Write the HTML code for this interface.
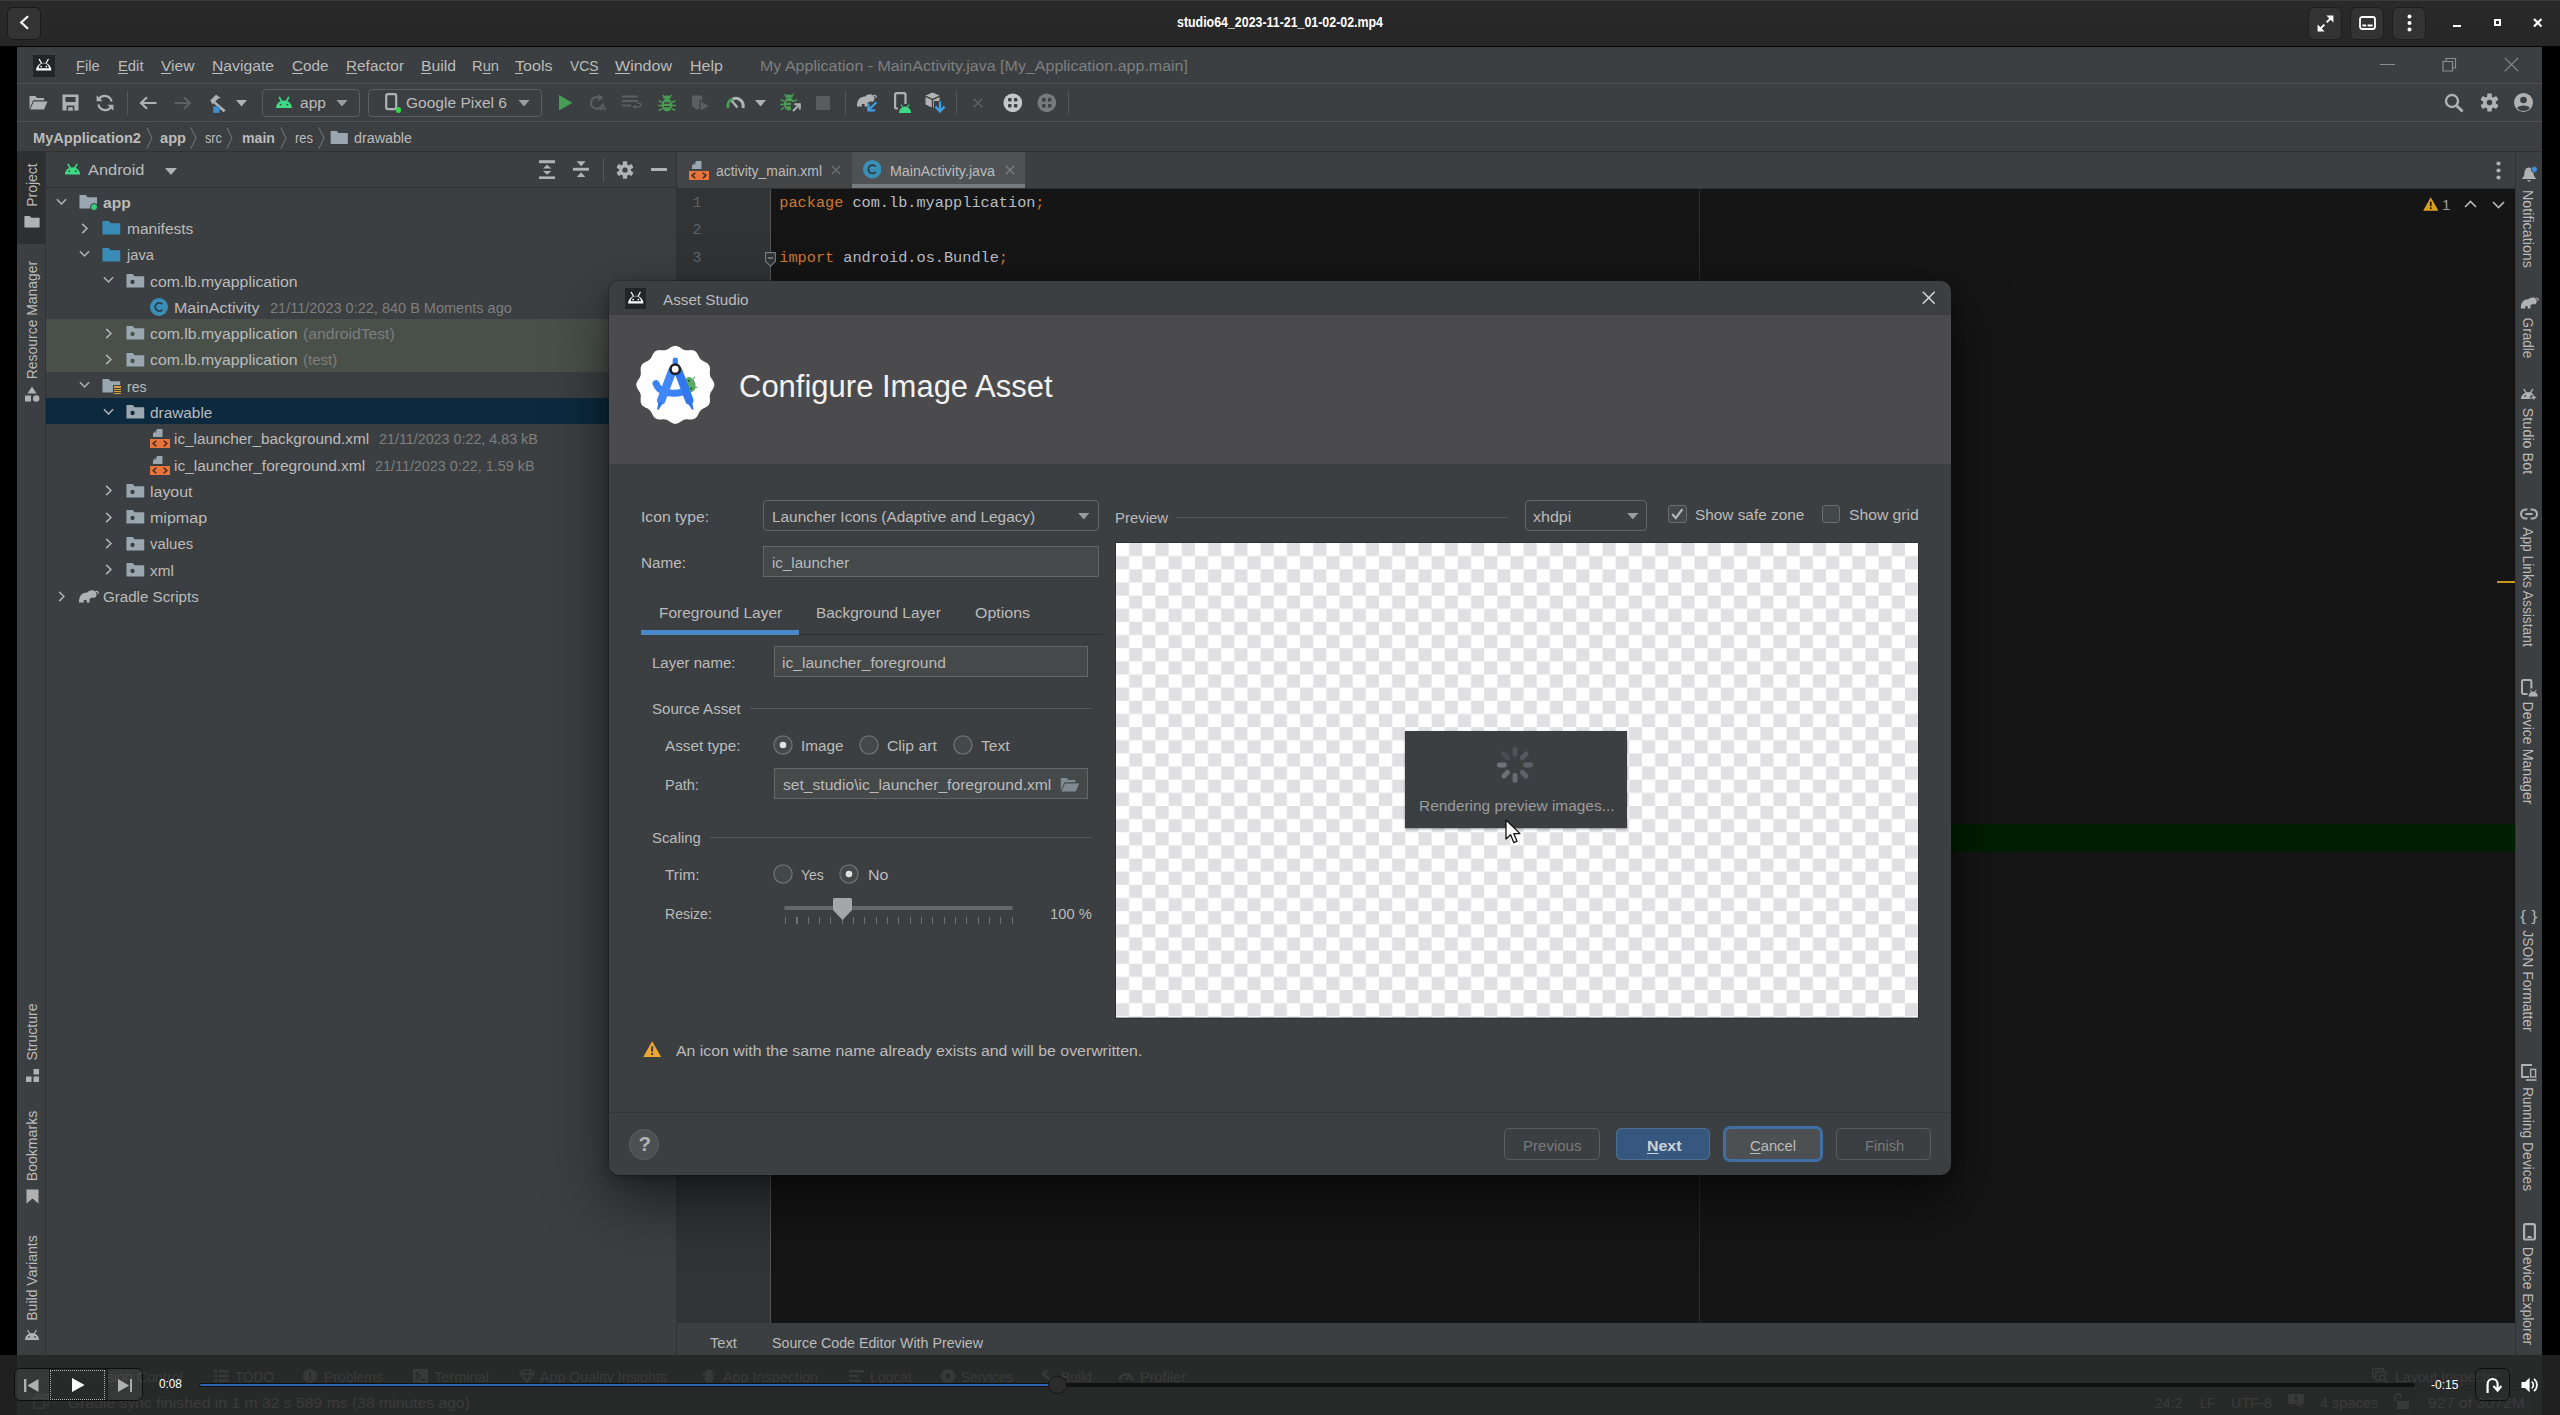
<!DOCTYPE html><html><head><meta charset="utf-8"><title>studio64</title><style>html,body{margin:0;padding:0;background:#000;}
body{width:2560px;height:1415px;position:relative;overflow:hidden;font-family:"Liberation Sans",sans-serif;}
div,span,svg{position:absolute;box-sizing:border-box;}
.t{white-space:pre;transform-origin:0 0;line-height:1;font-family:"Liberation Sans",sans-serif;}
.m{font-family:"Liberation Mono",monospace;}
u{text-decoration:underline;text-underline-offset:2px;text-decoration-thickness:1px;}
</style></head><body><div style="left:17.00px;top:47.00px;width:2525.00px;height:1368.00px;background:#3c3f41;"></div><div style="left:17.00px;top:83.00px;width:2525.00px;height:1.00px;background:#515151;"></div><div style="left:17.00px;top:121.00px;width:2525.00px;height:1.00px;background:#515151;"></div><div style="left:17.00px;top:151.00px;width:2525.00px;height:1.00px;background:#323232;"></div><div style="left:33.00px;top:55.00px;width:21.50px;height:21.50px;background:#222528;"></div><svg style="left:34.00px;top:55.30px;" width="19.50" height="19.50" viewBox="0 0 20 20"><path d="M2.2 16 A7.8 8 0 0 1 17.8 16 Z" fill="#ffffff"/><path d="M4.7 13.5 A5.3 5 0 0 1 15.3 13.5 Z" fill="#222528"/><path d="M5.4 4.4 L7.4 8 M14.6 4.4 L12.6 8" stroke="#ffffff" stroke-width="1.3" stroke-linecap="round"/><circle cx="7.3" cy="12" r="0.85" fill="#ffffff"/><circle cx="12.7" cy="12" r="0.85" fill="#ffffff"/></svg><span class="t" style="left:76.40px;top:57.86px;font-size:15.4px;font-weight:400;color:#bbbbbb;transform:scaleX(0.9511);"><u>F</u>ile</span><span class="t" style="left:117.50px;top:57.86px;font-size:15.4px;font-weight:400;color:#bbbbbb;transform:scaleX(0.9611);"><u>E</u>dit</span><span class="t" style="left:160.50px;top:57.86px;font-size:15.4px;font-weight:400;color:#bbbbbb;transform:scaleX(1.0123);"><u>V</u>iew</span><span class="t" style="left:212.00px;top:57.86px;font-size:15.4px;font-weight:400;color:#bbbbbb;transform:scaleX(1.0203);"><u>N</u>avigate</span><span class="t" style="left:292.00px;top:57.86px;font-size:15.4px;font-weight:400;color:#bbbbbb;transform:scaleX(0.9915);"><u>C</u>ode</span><span class="t" style="left:346.00px;top:57.86px;font-size:15.4px;font-weight:400;color:#bbbbbb;transform:scaleX(0.9968);"><u>R</u>efactor</span><span class="t" style="left:421.00px;top:57.86px;font-size:15.4px;font-weight:400;color:#bbbbbb;transform:scaleX(1.0224);"><u>B</u>uild</span><span class="t" style="left:472.00px;top:57.86px;font-size:15.4px;font-weight:400;color:#bbbbbb;transform:scaleX(0.9558);">R<u>u</u>n</span><span class="t" style="left:515.00px;top:57.86px;font-size:15.4px;font-weight:400;color:#bbbbbb;transform:scaleX(1.0435);"><u>T</u>ools</span><span class="t" style="left:569.50px;top:57.86px;font-size:15.4px;font-weight:400;color:#bbbbbb;transform:scaleX(0.9003);">VC<u>S</u></span><span class="t" style="left:615.00px;top:57.86px;font-size:15.4px;font-weight:400;color:#bbbbbb;transform:scaleX(1.0411);"><u>W</u>indow</span><span class="t" style="left:690.00px;top:57.86px;font-size:15.4px;font-weight:400;color:#bbbbbb;transform:scaleX(1.0419);"><u>H</u>elp</span><span class="t" style="left:760.00px;top:57.86px;font-size:15.4px;font-weight:400;color:#7d7f80;transform:scaleX(1.0409);">My Application - MainActivity.java [My_Application.app.main]</span><div style="left:2380.00px;top:64.00px;width:15.00px;height:1.30px;background:#8a8c8d;"></div><svg style="left:2442.00px;top:57.00px;" width="15.00" height="15.00" viewBox="0 0 15 15"><path d="M1 4.5 H10.5 V14 H1 Z M4 4.5 V1.5 H13.5 V11 H10.5" fill="none" stroke="#8a8c8d" stroke-width="1.2"/></svg><svg style="left:2504.00px;top:57.00px;" width="15.00" height="15.00" viewBox="0 0 15 15"><path d="M0.8 0.8 L14.2 14.2 M14.2 0.8 L0.8 14.2" stroke="#8a8c8d" stroke-width="1.2"/></svg><svg style="left:28.50px;top:95.00px;" width="19.00" height="15.00" viewBox="0 0 19.5 15.5"><path d="M0.5 14.5 V1 H6.5 L8.3 3.2 H15.5 V5.5 H4.2 L0.5 14.5 Z" fill="#afb1b3"/><path d="M1.2 15 L4.8 6.6 H19 L15.4 15 Z" fill="#afb1b3"/></svg><svg style="left:62.20px;top:94.00px;" width="17.00" height="17.00" viewBox="0 0 17 17"><path d="M0.5 0.5 H16.5 V16.5 H0.5 Z" fill="#afb1b3"/><rect x="3.4" y="3" width="10.2" height="5" fill="#3c3f41"/><rect x="4.6" y="11.6" width="7.8" height="5" fill="#3c3f41"/><rect x="6.2" y="13.2" width="4.6" height="3.4" fill="#afb1b3"/></svg><svg style="left:96.00px;top:93.50px;" width="18.00" height="18.00" viewBox="0 0 18 18"><path d="M15.6 7.4 A7 7 0 0 0 3.2 4.6 M2.4 10.6 A7 7 0 0 0 14.8 13.4" fill="none" stroke="#afb1b3" stroke-width="2.3"/><path d="M0.6 1.2 V7.2 H6.6 Z M17.4 16.8 V10.8 H11.4 Z" fill="#afb1b3"/></svg><div style="left:126.50px;top:91.00px;width:1.00px;height:24.00px;background:#555759;"></div><svg style="left:139.00px;top:95.50px;" width="18.00" height="14.00" viewBox="0 0 18 14"><path d="M17.5 7 H2.5 M8 1.2 L2 7 L8 12.8" fill="none" stroke="#afb1b3" stroke-width="2.2"/></svg><svg style="left:174.00px;top:95.50px;" width="18.00" height="14.00" viewBox="0 0 18 14"><path d="M0.5 7 H15.5 M10 1.2 L16 7 L10 12.8" fill="none" stroke="#5e6163" stroke-width="2.2"/></svg><svg style="left:206.50px;top:92.50px;" width="20.00" height="20.00" viewBox="0 0 20 20"><path d="M3.2 7.6 L9 1.8 L13.8 5 L11.2 5.6 L8.4 8.4 L18.6 17.2 L16.6 19.2 L6.6 10.2 L5.4 11.2 Z" fill="#afb1b3"/><rect x="6.2" y="13.4" width="6.4" height="6.4" fill="#3f8fd0"/></svg><svg style="left:236.00px;top:100.25px;" width="11.00" height="6.50" viewBox="0 0 12 7"><path d="M0 0 H12 L6 7 Z" fill="#afb1b3"/></svg><div style="left:262.00px;top:88.50px;width:98.00px;height:28.50px;background:transparent;border:1px solid #5a5d5f;border-radius:4px;"></div><svg style="left:274.50px;top:96.00px;" width="18.00" height="13.00" viewBox="1.5 4 17 12"><path d="M2.5 15.2 A7.5 7.2 0 0 1 17.5 15.2 Z" fill="#3ddc84"/><path d="M5.6 5.2 L7.6 8.6 M14.4 5.2 L12.4 8.6" stroke="#3ddc84" stroke-width="1.6" stroke-linecap="round"/><circle cx="6.8" cy="12" r="0.9" fill="#3c3f41"/><circle cx="13.2" cy="12" r="0.9" fill="#3c3f41"/></svg><span class="t" style="left:300.00px;top:95.26px;font-size:15.4px;font-weight:400;color:#bbbbbb;transform:scaleX(1.0122);">app</span><svg style="left:336.00px;top:99.95px;" width="12.00" height="6.50" viewBox="0 0 12 7"><path d="M0 0 H12 L6 7 Z" fill="#9a9da0"/></svg><div style="left:368.00px;top:88.50px;width:174.00px;height:28.50px;background:transparent;border:1px solid #5a5d5f;border-radius:4px;"></div><svg style="left:384.50px;top:92.50px;" width="13.00" height="18.00" viewBox="0 0 13 18"><rect x="1.2" y="1.2" width="10" height="15" rx="1.6" fill="none" stroke="#afb1b3" stroke-width="2.2"/></svg><div style="left:395.50px;top:107.00px;width:5.50px;height:5.50px;background:#31d64a;border-radius:50%;"></div><span class="t" style="left:406.00px;top:95.26px;font-size:15.4px;font-weight:400;color:#bbbbbb;transform:scaleX(1.0089);">Google Pixel 6</span><svg style="left:518.00px;top:99.95px;" width="12.00" height="6.50" viewBox="0 0 12 7"><path d="M0 0 H12 L6 7 Z" fill="#9a9da0"/></svg><svg style="left:558.55px;top:94.75px;" width="13.50" height="15.50" viewBox="0 0 13.5 15.5"><path d="M0 0 L13.5 7.75 L0 15.5 Z" fill="#499c54"/></svg><svg style="left:588.50px;top:94.00px;" width="18.00" height="17.00" viewBox="0 0 18 17"><path d="M10.6 3.8 A5.8 5.8 0 1 0 13 11.4" fill="none" stroke="#5c5f61" stroke-width="2.2"/><path d="M8.8 0.2 L14.6 3.6 L9.6 7.6 Z" fill="#5c5f61"/><path d="M11.4 16.6 L14 10 L16.6 16.6 M12.3 14.6 H15.7" fill="none" stroke="#5c5f61" stroke-width="1.3"/></svg><svg style="left:622.00px;top:95.00px;" width="20.00" height="15.00" viewBox="0 0 20 15"><path d="M0 1.5 H16 M0 6 H16 M0 10.5 H9" stroke="#5c5f61" stroke-width="2"/><path d="M11 11.8 H17.2 A1.8 1.8 0 0 0 17.2 8.2 H15" fill="none" stroke="#5c5f61" stroke-width="1.4"/><path d="M13.4 9.4 L10.6 11.8 L13.4 14.2 Z" fill="#5c5f61"/></svg><svg style="left:657.70px;top:93.50px;" width="18.00" height="18.00" viewBox="0 0 18 18"><ellipse cx="9" cy="11" rx="5.2" ry="6.4" fill="#499c54"/><path d="M5.4 4.8 A3.6 3.2 0 0 1 12.6 4.8 Z" fill="#499c54"/><path d="M4.6 1 L6.6 3.4 M13.4 1 L11.4 3.4 M0.6 6.6 L4 8.2 M17.4 6.6 L14 8.2 M0.2 11.4 H4 M17.8 11.4 H14 M0.8 16.6 L4.2 14.6 M17.2 16.6 L13.8 14.6" stroke="#499c54" stroke-width="1.5" fill="none"/><path d="M6 9 H12 M6 12.6 H12" stroke="#3c3f41" stroke-width="1.3"/></svg><svg style="left:691.00px;top:93.50px;" width="20.00" height="18.00" viewBox="0 0 20 18"><path d="M1 1.5 H11 V12 L6 16 L1 12 Z" fill="#5c5f61"/><path d="M9 6.5 L19 12 L9 17.5 Z" fill="#5c5f61" stroke="#3c3f41" stroke-width="1.2"/></svg><svg style="left:725.50px;top:96.00px;" width="19.00" height="13.00" viewBox="0 0 19 13"><path d="M2.2 12 A7.4 7.4 0 0 1 6.2 3.2" fill="none" stroke="#499c54" stroke-width="3"/><path d="M6.6 3 A7.4 7.4 0 0 1 16.8 12" fill="none" stroke="#afb1b3" stroke-width="3"/><path d="M5.6 4.6 L11.4 11.6" stroke="#afb1b3" stroke-width="2.4"/></svg><svg style="left:754.50px;top:100.25px;" width="11.00" height="6.50" viewBox="0 0 12 7"><path d="M0 0 H12 L6 7 Z" fill="#afb1b3"/></svg><svg style="left:780.00px;top:92.60px;" width="18.00" height="18.00" viewBox="0 0 18 18"><ellipse cx="9" cy="11" rx="5.2" ry="6.4" fill="#499c54"/><path d="M5.4 4.8 A3.6 3.2 0 0 1 12.6 4.8 Z" fill="#499c54"/><path d="M4.6 1 L6.6 3.4 M13.4 1 L11.4 3.4 M0.6 6.6 L4 8.2 M17.4 6.6 L14 8.2 M0.2 11.4 H4 M17.8 11.4 H14 M0.8 16.6 L4.2 14.6 M17.2 16.6 L13.8 14.6" stroke="#499c54" stroke-width="1.5" fill="none"/><path d="M6 9 H12 M6 12.6 H12" stroke="#3c3f41" stroke-width="1.3"/></svg><svg style="left:790.50px;top:102.00px;" width="10.50" height="10.50" viewBox="0 0 10.5 10.5"><rect x="0" y="0" width="10.5" height="10.5" fill="#3c3f41"/><path d="M2 9 L8.2 2.8 M3.4 2.2 H8.8 V7.6" fill="none" stroke="#afb1b3" stroke-width="2"/></svg><div style="left:816.00px;top:96.00px;width:14.00px;height:14.00px;background:#595b5d;"></div><div style="left:844.50px;top:91.00px;width:1.00px;height:24.00px;background:#555759;"></div><svg style="left:855.50px;top:93.00px;" width="21.00" height="15.00" viewBox="0 0 21 15"><path d="M1 13.6 C0.6 7 4 3.2 9.4 3.4 C11 1.2 15.6 0.4 17.6 3 C19.4 5.2 18.4 8.6 15.8 9 C15.2 9 14.8 8.4 15 7.8 C14 9.2 12.6 9.6 11.6 9.4 V13.6 H8.6 V11 H5.8 V13.6 Z" fill="#afb1b3"/><path d="M17.4 2.6 C19.6 1.6 20.8 3.4 19.6 5" fill="none" stroke="#afb1b3" stroke-width="1.2"/></svg><svg style="left:866.00px;top:101.00px;" width="12.00" height="11.00" viewBox="0 0 12 11"><path d="M10.4 1.2 L3.4 8.2 M2.4 2.6 V9.4 H9.2" fill="none" stroke="#3d9fe0" stroke-width="2.3"/></svg><svg style="left:893.50px;top:91.50px;" width="13.00" height="18.00" viewBox="0 0 13 18"><rect x="1.1" y="1.1" width="10.4" height="15.4" rx="1.6" fill="none" stroke="#afb1b3" stroke-width="2.2"/></svg><svg style="left:897.50px;top:103.50px;" width="14.00" height="9.00" viewBox="0 0 14 9"><rect x="0" y="0" width="14" height="9" fill="#3c3f41"/><path d="M1 9 A6 6.4 0 0 1 13 9 Z" fill="#3ddc84"/><path d="M3 0.6 L4.6 3 M11 0.6 L9.4 3" stroke="#3ddc84" stroke-width="1.1"/></svg><svg style="left:924.50px;top:92.00px;" width="15.00" height="16.00" viewBox="0 0 15 16"><path d="M7.5 0.5 L14.5 3.6 L7.5 6.8 L0.5 3.6 Z" fill="#afb1b3"/><path d="M0.5 5 L6.8 8 V15.4 L0.5 12.4 Z" fill="#afb1b3"/><path d="M14.5 5 L8.2 8 V15.4 L14.5 12.4 Z" fill="#afb1b3"/></svg><svg style="left:934.00px;top:101.00px;" width="12.00" height="12.00" viewBox="0 0 12 12"><rect x="0" y="0" width="12" height="12" fill="#3c3f41"/><path d="M6 0.5 V9.5 M1.4 5.6 L6 10.4 L10.6 5.6" fill="none" stroke="#3d9fe0" stroke-width="2.3"/></svg><div style="left:956.00px;top:91.00px;width:1.00px;height:24.00px;background:#555759;"></div><svg style="left:973.00px;top:97.50px;" width="10.00" height="10.00" viewBox="0 0 10 10"><path d="M0.8 0.8 L9.2 9.2 M9.2 0.8 L0.8 9.2" stroke="#606365" stroke-width="1.4" fill="none"/></svg><svg style="left:1002.75px;top:92.75px;" width="19.50" height="19.50" viewBox="0 0 20 20"><circle cx="10" cy="10" r="9.6" fill="#c4c6c8"/><rect x="5.2" y="5.2" width="3.6" height="3.6" rx="1" fill="#3c3f41"/><rect x="5.2" y="11.2" width="3.6" height="3.6" rx="1" fill="#3c3f41"/><rect x="11.2" y="5.2" width="3.6" height="3.6" rx="1" fill="#3c3f41"/><rect x="11.2" y="11.2" width="3.6" height="3.6" rx="1" fill="#3c3f41"/></svg><svg style="left:1036.95px;top:92.75px;" width="19.50" height="19.50" viewBox="0 0 20 20"><circle cx="10" cy="10" r="9.6" fill="#77797b"/><rect x="5.2" y="5.2" width="3.6" height="3.6" rx="1" fill="#3c3f41"/><rect x="5.2" y="11.2" width="3.6" height="3.6" rx="1" fill="#3c3f41"/><rect x="11.2" y="5.2" width="3.6" height="3.6" rx="1" fill="#3c3f41"/><rect x="11.2" y="11.2" width="3.6" height="3.6" rx="1" fill="#3c3f41"/></svg><div style="left:1068.00px;top:91.00px;width:1.00px;height:24.00px;background:#555759;"></div><svg style="left:2443.50px;top:93.00px;" width="20.00" height="20.00" viewBox="0 0 20 20"><circle cx="8" cy="8" r="6" fill="none" stroke="#afb1b3" stroke-width="2.4"/><path d="M12.4 12.4 L18.6 18.6" stroke="#afb1b3" stroke-width="2.8"/></svg><svg style="left:2479.50px;top:93.00px;" width="19.00" height="19.00" viewBox="0 0 20 20"><rect x="7.6" y="0.4" width="4.8" height="6" rx="0.8" fill="#afb1b3" transform="rotate(0 10 10)"/><rect x="7.6" y="0.4" width="4.8" height="6" rx="0.8" fill="#afb1b3" transform="rotate(60 10 10)"/><rect x="7.6" y="0.4" width="4.8" height="6" rx="0.8" fill="#afb1b3" transform="rotate(120 10 10)"/><rect x="7.6" y="0.4" width="4.8" height="6" rx="0.8" fill="#afb1b3" transform="rotate(180 10 10)"/><rect x="7.6" y="0.4" width="4.8" height="6" rx="0.8" fill="#afb1b3" transform="rotate(240 10 10)"/><rect x="7.6" y="0.4" width="4.8" height="6" rx="0.8" fill="#afb1b3" transform="rotate(300 10 10)"/><circle cx="10" cy="10" r="6.7" fill="#afb1b3"/><circle cx="10" cy="10" r="2.9" fill="#3c3f41"/></svg><svg style="left:2514.00px;top:93.00px;" width="19.00" height="19.00" viewBox="0 0 19 19"><circle cx="9.5" cy="9.5" r="9.5" fill="#afb1b3"/><circle cx="9.5" cy="7" r="3.3" fill="#3c3f41"/><path d="M3.2 15.4 C4 11.6 15 11.6 15.8 15.4 A9 9 0 0 1 3.2 15.4 Z" fill="#3c3f41"/></svg><span class="t" style="left:33.00px;top:129.76px;font-size:15.4px;font-weight:700;color:#bbbbbb;transform:scaleX(0.9496);">MyApplication2</span><span class="t" style="left:160.00px;top:129.76px;font-size:15.4px;font-weight:700;color:#bbbbbb;transform:scaleX(0.9498);">app</span><span class="t" style="left:205.00px;top:129.76px;font-size:15.4px;font-weight:400;color:#bbbbbb;transform:scaleX(0.8280);">src</span><span class="t" style="left:242.00px;top:129.76px;font-size:15.4px;font-weight:700;color:#bbbbbb;transform:scaleX(0.9187);">main</span><span class="t" style="left:295.00px;top:129.76px;font-size:15.4px;font-weight:400;color:#bbbbbb;transform:scaleX(0.8415);">res</span><svg style="left:145.50px;top:127.00px;" width="7.00" height="22.00" viewBox="0 0 7 22"><path d="M0.8 0.5 L6 11 L0.8 21.5" fill="none" stroke="#6d7072" stroke-width="1.1"/></svg><svg style="left:190.00px;top:127.00px;" width="7.00" height="22.00" viewBox="0 0 7 22"><path d="M0.8 0.5 L6 11 L0.8 21.5" fill="none" stroke="#6d7072" stroke-width="1.1"/></svg><svg style="left:226.00px;top:127.00px;" width="7.00" height="22.00" viewBox="0 0 7 22"><path d="M0.8 0.5 L6 11 L0.8 21.5" fill="none" stroke="#6d7072" stroke-width="1.1"/></svg><svg style="left:280.00px;top:127.00px;" width="7.00" height="22.00" viewBox="0 0 7 22"><path d="M0.8 0.5 L6 11 L0.8 21.5" fill="none" stroke="#6d7072" stroke-width="1.1"/></svg><svg style="left:317.50px;top:127.00px;" width="7.00" height="22.00" viewBox="0 0 7 22"><path d="M0.8 0.5 L6 11 L0.8 21.5" fill="none" stroke="#6d7072" stroke-width="1.1"/></svg><svg style="left:329.50px;top:129.50px;" width="18.50" height="14.50" viewBox="0 0 20 16"><path d="M0.5 1 H7.2 L9.2 3.4 H19.5 V15.5 H0.5 Z" fill="#9aa7b0"/></svg><span class="t" style="left:354.00px;top:129.76px;font-size:15.4px;font-weight:400;color:#bbbbbb;transform:scaleX(0.9285);">drawable</span><div style="left:17.00px;top:152.00px;width:28.50px;height:1203.00px;background:#3c3f41;"></div><div style="left:17.00px;top:152.00px;width:28.50px;height:92.00px;background:#2d2f30;"></div><div style="left:45.00px;top:152.00px;width:1.00px;height:1203.00px;background:#323232;"></div><span class="t" style="left:32.00px;top:184.75px;font-size:15.4px;font-weight:400;color:#bbbbbb;transform-origin:0 0;transform:rotate(-90deg) scaleX(0.9080) translate(-50%,-50%);">Project</span><svg style="left:23.50px;top:214.50px;" width="16.00" height="13.00" viewBox="0 0 20 16"><path d="M0.5 1 H7.2 L9.2 3.4 H19.5 V15.5 H0.5 Z" fill="#afb1b3"/></svg><span class="t" style="left:32.00px;top:319.80px;font-size:15.4px;font-weight:400;color:#bbbbbb;transform-origin:0 0;transform:rotate(-90deg) scaleX(0.9046) translate(-50%,-50%);">Resource Manager</span><svg style="left:24.00px;top:386.00px;" width="16.00" height="16.00" viewBox="0 0 16 16"><path d="M8 0.5 L12.5 7.5 H3.5 Z" fill="#afb1b3"/><rect x="1" y="9.5" width="6" height="6" fill="#afb1b3"/><circle cx="12.2" cy="12.5" r="3.2" fill="#afb1b3"/></svg><span class="t" style="left:32.00px;top:1031.90px;font-size:15.4px;font-weight:400;color:#bbbbbb;transform-origin:0 0;transform:rotate(-90deg) scaleX(0.9127) translate(-50%,-50%);">Structure</span><svg style="left:25.50px;top:1068.50px;" width="13.00" height="13.00" viewBox="0 0 13 13"><rect x="0" y="7.5" width="5.5" height="5.5" fill="#afb1b3"/><rect x="7.5" y="7.5" width="5.5" height="5.5" fill="#afb1b3"/><rect x="7.5" y="0" width="5.5" height="5.5" fill="#afb1b3"/></svg><span class="t" style="left:32.00px;top:1146.25px;font-size:15.4px;font-weight:400;color:#bbbbbb;transform-origin:0 0;transform:rotate(-90deg) scaleX(0.9158) translate(-50%,-50%);">Bookmarks</span><svg style="left:25.50px;top:1188.50px;" width="13.00" height="15.00" viewBox="0 0 13 15"><path d="M0.5 0.5 H12.5 V14.5 L6.5 9.6 L0.5 14.5 Z" fill="#afb1b3"/></svg><span class="t" style="left:32.00px;top:1278.25px;font-size:15.4px;font-weight:400;color:#bbbbbb;transform-origin:0 0;transform:rotate(-90deg) scaleX(0.9112) translate(-50%,-50%);">Build Variants</span><svg style="left:24.00px;top:1328.50px;" width="16.00" height="12.00" viewBox="1.5 4 17 12"><path d="M2.5 15.2 A7.5 7.2 0 0 1 17.5 15.2 Z" fill="#afb1b3"/><path d="M5.6 5.2 L7.6 8.6 M14.4 5.2 L12.4 8.6" stroke="#afb1b3" stroke-width="1.3" stroke-linecap="round"/><circle cx="6.8" cy="12" r="0.9" fill="#3c3f41"/><circle cx="13.2" cy="12" r="0.9" fill="#3c3f41"/></svg><div style="left:46.00px;top:152.00px;width:630.00px;height:1203.00px;background:#3c3f41;"></div><div style="left:46.00px;top:186.50px;width:630.00px;height:1.00px;background:#323232;"></div><div style="left:676.00px;top:152.00px;width:1.00px;height:1203.00px;background:#323232;"></div><svg style="left:63.50px;top:163.00px;" width="17.00" height="12.50" viewBox="1.5 4 17 12"><path d="M2.5 15.2 A7.5 7.2 0 0 1 17.5 15.2 Z" fill="#3ddc84"/><path d="M5.6 5.2 L7.6 8.6 M14.4 5.2 L12.4 8.6" stroke="#3ddc84" stroke-width="1.6" stroke-linecap="round"/><circle cx="6.8" cy="12" r="0.9" fill="#3c3f41"/><circle cx="13.2" cy="12" r="0.9" fill="#3c3f41"/></svg><span class="t" style="left:88.00px;top:162.26px;font-size:15.4px;font-weight:400;color:#bbbbbb;transform:scaleX(1.0648);">Android</span><svg style="left:165.00px;top:167.50px;" width="12.00" height="7.00" viewBox="0 0 12 7"><path d="M0 0 H12 L6 7 Z" fill="#afb1b3"/></svg><svg style="left:538.90px;top:159.60px;" width="16.20" height="19.60" viewBox="0 0 16.2 19.6"><rect x="0" y="0.2" width="16.2" height="3" fill="#afb1b3"/><rect x="0" y="16.4" width="16.2" height="3" fill="#afb1b3"/><path d="M8.1 4.8 L12.3 8.6 H3.9 Z M8.1 14.8 L12.3 11 H3.9 Z" fill="#afb1b3"/></svg><svg style="left:573.00px;top:161.00px;" width="16.20" height="16.40" viewBox="0 0 16.2 16.4"><rect x="0" y="6.8" width="16.2" height="2.9" fill="#afb1b3"/><path d="M8.1 5.2 L12.6 0.2 H3.6 Z M8.1 11.2 L12.6 16.2 H3.6 Z" fill="#afb1b3"/></svg><div style="left:603.00px;top:158.00px;width:1.00px;height:24.00px;background:#555759;"></div><svg style="left:615.50px;top:160.50px;" width="18.00" height="18.00" viewBox="0 0 20 20"><rect x="7.6" y="0.4" width="4.8" height="6" rx="0.8" fill="#afb1b3" transform="rotate(0 10 10)"/><rect x="7.6" y="0.4" width="4.8" height="6" rx="0.8" fill="#afb1b3" transform="rotate(60 10 10)"/><rect x="7.6" y="0.4" width="4.8" height="6" rx="0.8" fill="#afb1b3" transform="rotate(120 10 10)"/><rect x="7.6" y="0.4" width="4.8" height="6" rx="0.8" fill="#afb1b3" transform="rotate(180 10 10)"/><rect x="7.6" y="0.4" width="4.8" height="6" rx="0.8" fill="#afb1b3" transform="rotate(240 10 10)"/><rect x="7.6" y="0.4" width="4.8" height="6" rx="0.8" fill="#afb1b3" transform="rotate(300 10 10)"/><circle cx="10" cy="10" r="6.7" fill="#afb1b3"/><circle cx="10" cy="10" r="2.9" fill="#3c3f41"/></svg><div style="left:651.00px;top:168.30px;width:16.00px;height:2.60px;background:#afb1b3;"></div><div style="left:46.00px;top:319.40px;width:630.00px;height:52.30px;background:#49504a;"></div><div style="left:46.00px;top:398.30px;width:630.00px;height:26.20px;background:#0d293e;"></div><svg style="left:55.60px;top:197.50px;" width="11.00" height="7.50" viewBox="0 0 12 8"><path d="M1 1.2 L6 6.4 L11 1.2" fill="none" stroke="#afb1b3" stroke-width="1.7"/></svg><svg style="left:78.75px;top:194.00px;" width="18.70" height="15.00" viewBox="0 0 20 16"><path d="M0.5 1 H7.2 L9.2 3.4 H19.5 V15.5 H0.5 Z" fill="#9aa7b0"/></svg><div style="left:89.75px;top:202.50px;width:8.00px;height:8.00px;background:#33d17a;border-radius:50%;border:1px solid #3c3f41;"></div><span class="t" style="left:102.50px;top:194.86px;font-size:15.4px;font-weight:700;color:#bbbbbb;transform:scaleX(1.0155);">app</span><svg style="left:81.40px;top:222.77px;" width="7.50" height="11.00" viewBox="0 0 8 12"><path d="M1.2 1 L6.4 6 L1.2 11" fill="none" stroke="#afb1b3" stroke-width="1.7"/></svg><svg style="left:102.25px;top:220.27px;" width="18.70" height="15.00" viewBox="0 0 20 16"><path d="M0.5 1 H7.2 L9.2 3.4 H19.5 V15.5 H0.5 Z" fill="#3a8cb8"/></svg><span class="t" style="left:126.50px;top:221.13px;font-size:15.4px;font-weight:400;color:#bbbbbb;transform:scaleX(1.0065);">manifests</span><svg style="left:79.40px;top:250.04px;" width="11.00" height="7.50" viewBox="0 0 12 8"><path d="M1 1.2 L6 6.4 L11 1.2" fill="none" stroke="#afb1b3" stroke-width="1.7"/></svg><svg style="left:102.25px;top:246.54px;" width="18.70" height="15.00" viewBox="0 0 20 16"><path d="M0.5 1 H7.2 L9.2 3.4 H19.5 V15.5 H0.5 Z" fill="#3a8cb8"/></svg><span class="t" style="left:126.50px;top:247.40px;font-size:15.4px;font-weight:400;color:#bbbbbb;transform:scaleX(0.9527);">java</span><svg style="left:103.00px;top:276.31px;" width="11.00" height="7.50" viewBox="0 0 12 8"><path d="M1 1.2 L6 6.4 L11 1.2" fill="none" stroke="#afb1b3" stroke-width="1.7"/></svg><svg style="left:126.00px;top:272.81px;" width="18.70" height="15.00" viewBox="0 0 20 16"><path d="M0.5 1 H7.2 L9.2 3.4 H19.5 V15.5 H0.5 Z" fill="#9aa7b0"/><circle cx="7" cy="9.6" r="2.3" fill="#3c3f41"/></svg><span class="t" style="left:150.20px;top:273.67px;font-size:15.4px;font-weight:400;color:#bbbbbb;transform:scaleX(1.0270);">com.lb.myapplication</span><svg style="left:150.00px;top:298.08px;" width="18.00" height="18.00" viewBox="0 0 18 18"><circle cx="9" cy="9" r="9" fill="#3a8fb7"/><path d="M12.4 6.3 A4.1 4.1 0 1 0 12.4 11.7" fill="none" stroke="#2b3b45" stroke-width="1.7"/></svg><span class="t" style="left:174.20px;top:299.94px;font-size:15.4px;font-weight:400;color:#bbbbbb;transform:scaleX(1.0425);">MainActivity</span><span class="t" style="left:269.80px;top:299.94px;font-size:15.4px;font-weight:400;color:#7e7e7e;transform:scaleX(0.9430);">21/11/2023 0:22, 840 B Moments ago</span><svg style="left:105.00px;top:327.85px;" width="7.50" height="11.00" viewBox="0 0 8 12"><path d="M1.2 1 L6.4 6 L1.2 11" fill="none" stroke="#afb1b3" stroke-width="1.7"/></svg><svg style="left:126.00px;top:325.35px;" width="18.70" height="15.00" viewBox="0 0 20 16"><path d="M0.5 1 H7.2 L9.2 3.4 H19.5 V15.5 H0.5 Z" fill="#9aa7b0"/><circle cx="7" cy="9.6" r="2.3" fill="#49504a"/></svg><span class="t" style="left:150.20px;top:326.21px;font-size:15.4px;font-weight:400;color:#bbbbbb;transform:scaleX(1.0270);">com.lb.myapplication</span><span class="t" style="left:303.00px;top:326.21px;font-size:15.4px;font-weight:400;color:#7e7e7e;transform:scaleX(1.0208);">(androidTest)</span><svg style="left:105.00px;top:354.12px;" width="7.50" height="11.00" viewBox="0 0 8 12"><path d="M1.2 1 L6.4 6 L1.2 11" fill="none" stroke="#afb1b3" stroke-width="1.7"/></svg><svg style="left:126.00px;top:351.62px;" width="18.70" height="15.00" viewBox="0 0 20 16"><path d="M0.5 1 H7.2 L9.2 3.4 H19.5 V15.5 H0.5 Z" fill="#9aa7b0"/><circle cx="7" cy="9.6" r="2.3" fill="#49504a"/></svg><span class="t" style="left:150.20px;top:352.48px;font-size:15.4px;font-weight:400;color:#bbbbbb;transform:scaleX(1.0270);">com.lb.myapplication</span><span class="t" style="left:303.00px;top:352.48px;font-size:15.4px;font-weight:400;color:#7e7e7e;transform:scaleX(0.9754);">(test)</span><svg style="left:79.40px;top:381.39px;" width="11.00" height="7.50" viewBox="0 0 12 8"><path d="M1 1.2 L6 6.4 L11 1.2" fill="none" stroke="#afb1b3" stroke-width="1.7"/></svg><svg style="left:102.25px;top:377.89px;" width="18.70" height="15.00" viewBox="0 0 20 16"><path d="M0.5 1 H7.2 L9.2 3.4 H19.5 V15.5 H0.5 Z" fill="#9aa7b0"/></svg><div style="left:112.75px;top:385.39px;width:9.00px;height:9.50px;background:#3c3f41;"></div><div style="left:113.75px;top:386.39px;width:7.50px;height:1.30px;background:#d9a343;"></div><div style="left:113.75px;top:388.59px;width:7.50px;height:1.30px;background:#d9a343;"></div><div style="left:113.75px;top:390.79px;width:7.50px;height:1.30px;background:#d9a343;"></div><div style="left:113.75px;top:392.99px;width:7.50px;height:1.30px;background:#d9a343;"></div><span class="t" style="left:126.50px;top:378.75px;font-size:15.4px;font-weight:400;color:#bbbbbb;transform:scaleX(0.9210);">res</span><svg style="left:103.00px;top:407.66px;" width="11.00" height="7.50" viewBox="0 0 12 8"><path d="M1 1.2 L6 6.4 L11 1.2" fill="none" stroke="#afb1b3" stroke-width="1.7"/></svg><svg style="left:126.00px;top:404.16px;" width="18.70" height="15.00" viewBox="0 0 20 16"><path d="M0.5 1 H7.2 L9.2 3.4 H19.5 V15.5 H0.5 Z" fill="#9aa7b0"/><circle cx="7" cy="9.6" r="2.3" fill="#0d293e"/></svg><span class="t" style="left:150.20px;top:405.02px;font-size:15.4px;font-weight:400;color:#bbbbbb;transform:scaleX(0.9989);">drawable</span><svg style="left:150.00px;top:428.43px;" width="20.00" height="20.00" viewBox="0 0 20 20"><path d="M3 9 V5.2 L7.2 1 H12.5 V9 Z" fill="#9aa7b0"/><path d="M3 4.6 L6.6 1 V4.6 Z" fill="#3c3f41" opacity="0.55"/><rect x="0" y="11" width="20" height="9" fill="#e8743b"/><path d="M6.3 12.8 L3.2 15.5 L6.3 18.2 M13.7 12.8 L16.8 15.5 L13.7 18.2" fill="none" stroke="#3a2a22" stroke-width="1.5"/></svg><span class="t" style="left:174.20px;top:431.29px;font-size:15.4px;font-weight:400;color:#bbbbbb;transform:scaleX(0.9963);">ic_launcher_background.xml</span><span class="t" style="left:379.40px;top:431.29px;font-size:15.4px;font-weight:400;color:#7e7e7e;transform:scaleX(0.9293);">21/11/2023 0:22, 4.83 kB</span><svg style="left:150.00px;top:454.70px;" width="20.00" height="20.00" viewBox="0 0 20 20"><path d="M3 9 V5.2 L7.2 1 H12.5 V9 Z" fill="#9aa7b0"/><path d="M3 4.6 L6.6 1 V4.6 Z" fill="#3c3f41" opacity="0.55"/><rect x="0" y="11" width="20" height="9" fill="#e8743b"/><path d="M6.3 12.8 L3.2 15.5 L6.3 18.2 M13.7 12.8 L16.8 15.5 L13.7 18.2" fill="none" stroke="#3a2a22" stroke-width="1.5"/></svg><span class="t" style="left:174.20px;top:457.56px;font-size:15.4px;font-weight:400;color:#bbbbbb;transform:scaleX(1.0066);">ic_launcher_foreground.xml</span><span class="t" style="left:375.40px;top:457.56px;font-size:15.4px;font-weight:400;color:#7e7e7e;transform:scaleX(0.9334);">21/11/2023 0:22, 1.59 kB</span><svg style="left:105.00px;top:485.47px;" width="7.50" height="11.00" viewBox="0 0 8 12"><path d="M1.2 1 L6.4 6 L1.2 11" fill="none" stroke="#afb1b3" stroke-width="1.7"/></svg><svg style="left:126.00px;top:482.97px;" width="18.70" height="15.00" viewBox="0 0 20 16"><path d="M0.5 1 H7.2 L9.2 3.4 H19.5 V15.5 H0.5 Z" fill="#9aa7b0"/><circle cx="7" cy="9.6" r="2.3" fill="#3c3f41"/></svg><span class="t" style="left:150.20px;top:483.83px;font-size:15.4px;font-weight:400;color:#bbbbbb;transform:scaleX(1.0346);">layout</span><svg style="left:105.00px;top:511.74px;" width="7.50" height="11.00" viewBox="0 0 8 12"><path d="M1.2 1 L6.4 6 L1.2 11" fill="none" stroke="#afb1b3" stroke-width="1.7"/></svg><svg style="left:126.00px;top:509.24px;" width="18.70" height="15.00" viewBox="0 0 20 16"><path d="M0.5 1 H7.2 L9.2 3.4 H19.5 V15.5 H0.5 Z" fill="#9aa7b0"/><circle cx="7" cy="9.6" r="2.3" fill="#3c3f41"/></svg><span class="t" style="left:150.20px;top:510.10px;font-size:15.4px;font-weight:400;color:#bbbbbb;transform:scaleX(1.0429);">mipmap</span><svg style="left:105.00px;top:538.01px;" width="7.50" height="11.00" viewBox="0 0 8 12"><path d="M1.2 1 L6.4 6 L1.2 11" fill="none" stroke="#afb1b3" stroke-width="1.7"/></svg><svg style="left:126.00px;top:535.51px;" width="18.70" height="15.00" viewBox="0 0 20 16"><path d="M0.5 1 H7.2 L9.2 3.4 H19.5 V15.5 H0.5 Z" fill="#9aa7b0"/><circle cx="7" cy="9.6" r="2.3" fill="#3c3f41"/></svg><span class="t" style="left:150.20px;top:536.37px;font-size:15.4px;font-weight:400;color:#bbbbbb;transform:scaleX(0.9708);">values</span><svg style="left:105.00px;top:564.28px;" width="7.50" height="11.00" viewBox="0 0 8 12"><path d="M1.2 1 L6.4 6 L1.2 11" fill="none" stroke="#afb1b3" stroke-width="1.7"/></svg><svg style="left:126.00px;top:561.78px;" width="18.70" height="15.00" viewBox="0 0 20 16"><path d="M0.5 1 H7.2 L9.2 3.4 H19.5 V15.5 H0.5 Z" fill="#9aa7b0"/><circle cx="7" cy="9.6" r="2.3" fill="#3c3f41"/></svg><span class="t" style="left:150.20px;top:562.64px;font-size:15.4px;font-weight:400;color:#bbbbbb;transform:scaleX(0.9943);">xml</span><svg style="left:57.60px;top:590.55px;" width="7.50" height="11.00" viewBox="0 0 8 12"><path d="M1.2 1 L6.4 6 L1.2 11" fill="none" stroke="#afb1b3" stroke-width="1.7"/></svg><svg style="left:77.75px;top:588.55px;" width="21.00" height="15.00" viewBox="0 0 21 15"><path d="M1 13.6 C0.6 7 4 3.2 9.4 3.4 C11 1.2 15.6 0.4 17.6 3 C19.4 5.2 18.4 8.6 15.8 9 C15.2 9 14.8 8.4 15 7.8 C14 9.2 12.6 9.6 11.6 9.4 V13.6 H8.6 V11 H5.8 V13.6 Z" fill="#afb1b3"/><path d="M17.4 2.6 C19.6 1.6 20.8 3.4 19.6 5" fill="none" stroke="#afb1b3" stroke-width="1.2"/></svg><span class="t" style="left:102.50px;top:588.91px;font-size:15.4px;font-weight:400;color:#bbbbbb;transform:scaleX(0.9824);">Gradle Scripts</span><div style="left:677.00px;top:152.00px;width:1838.00px;height:36.00px;background:#3c3f41;"></div><div style="left:677.00px;top:187.50px;width:1838.00px;height:1.00px;background:#323232;"></div><div style="left:677.00px;top:152.00px;width:174.50px;height:35.50px;background:#434446;"></div><div style="left:851.50px;top:152.00px;width:173.50px;height:35.50px;background:#4e5254;"></div><div style="left:851.50px;top:183.50px;width:173.50px;height:4.00px;background:#747a80;"></div><svg style="left:688.80px;top:160.00px;" width="20.00" height="20.00" viewBox="0 0 20 20"><path d="M3 9 V5.2 L7.2 1 H12.5 V9 Z" fill="#9aa7b0"/><path d="M3 4.6 L6.6 1 V4.6 Z" fill="#3c3f41" opacity="0.55"/><rect x="0" y="11" width="20" height="9" fill="#e8743b"/><path d="M6.3 12.8 L3.2 15.5 L6.3 18.2 M13.7 12.8 L16.8 15.5 L13.7 18.2" fill="none" stroke="#3a2a22" stroke-width="1.5"/></svg><span class="t" style="left:715.80px;top:163.26px;font-size:15.4px;font-weight:400;color:#bbbbbb;transform:scaleX(0.9047);">activity_main.xml</span><svg style="left:831.00px;top:165.00px;" width="10.00" height="10.00" viewBox="0 0 10 10"><path d="M0.8 0.8 L9.2 9.2 M9.2 0.8 L0.8 9.2" stroke="#6e7173" stroke-width="1.3" fill="none"/></svg><svg style="left:862.50px;top:160.30px;" width="18.50" height="18.50" viewBox="0 0 18 18"><circle cx="9" cy="9" r="9" fill="#3a8fb7"/><path d="M12.4 6.3 A4.1 4.1 0 1 0 12.4 11.7" fill="none" stroke="#2b3b45" stroke-width="1.7"/></svg><span class="t" style="left:889.50px;top:163.26px;font-size:15.4px;font-weight:400;color:#bbbbbb;transform:scaleX(0.9254);">MainActivity.java</span><svg style="left:1005.00px;top:165.00px;" width="10.00" height="10.00" viewBox="0 0 10 10"><path d="M0.8 0.8 L9.2 9.2 M9.2 0.8 L0.8 9.2" stroke="#7d8082" stroke-width="1.3" fill="none"/></svg><svg style="left:2495.50px;top:160.50px;" width="5.00" height="19.00" viewBox="0 0 5 19"><circle cx="2.5" cy="2.5" r="2.1" fill="#afb1b3"/><circle cx="2.5" cy="9.5" r="2.1" fill="#afb1b3"/><circle cx="2.5" cy="16.5" r="2.1" fill="#afb1b3"/></svg><div style="left:677.00px;top:188.50px;width:1838.00px;height:1134.50px;background:#151516;"></div><div style="left:677.00px;top:188.50px;width:93.50px;height:1134.50px;background:#313335;"></div><div style="left:770.00px;top:188.50px;width:1.00px;height:1134.50px;background:#555657;"></div><div style="left:1699.00px;top:188.50px;width:1.00px;height:1134.50px;background:#2c2c2e;"></div><span class="t m" style="left:692.50px;top:195.70px;font-size:15px;font-weight:400;color:#606366;transform:scaleX(1.0000);">1</span><span class="t m" style="left:692.50px;top:223.20px;font-size:15px;font-weight:400;color:#606366;transform:scaleX(1.0000);">2</span><span class="t m" style="left:692.50px;top:250.70px;font-size:15px;font-weight:400;color:#606366;transform:scaleX(1.0000);">3</span><span class="t m" style="left:779.30px;top:195.81px;font-size:15.25px;font-weight:400;color:#cc7832;transform:scaleX(1.0000);">package </span><span class="t m" style="left:852.42px;top:195.81px;font-size:15.25px;font-weight:400;color:#b9bdc4;transform:scaleX(1.0000);">com.lb.myapplication</span><span class="t m" style="left:1035.22px;top:195.81px;font-size:15.25px;font-weight:400;color:#cc7832;transform:scaleX(1.0000);">;</span><span class="t m" style="left:779.30px;top:250.81px;font-size:15.25px;font-weight:400;color:#cc7832;transform:scaleX(1.0000);">import </span><span class="t m" style="left:843.28px;top:250.81px;font-size:15.25px;font-weight:400;color:#b9bdc4;transform:scaleX(1.0000);">android.os.Bundle</span><span class="t m" style="left:998.66px;top:250.81px;font-size:15.25px;font-weight:400;color:#cc7832;transform:scaleX(1.0000);">;</span><svg style="left:765.00px;top:251.50px;" width="11.00" height="15.00" viewBox="0 0 11 15"><path d="M0.6 0.6 H10.4 V9.4 L5.5 14.2 L0.6 9.4 Z" fill="#313335" stroke="#7a7d80" stroke-width="1.1"/><path d="M2.8 6 H8.2" stroke="#9a9da0" stroke-width="1.2"/></svg><svg style="left:2422.50px;top:196.50px;" width="15.50" height="14.00" viewBox="0 0 18 16"><path d="M9 0.3 L17.8 15.7 H0.2 Z" fill="#d9a020"/><rect x="8" y="5.2" width="2" height="5.4" fill="#1a1a1a"/><rect x="8" y="11.8" width="2" height="2.1" fill="#1a1a1a"/></svg><span class="t" style="left:2442.00px;top:197.30px;font-size:15px;font-weight:400;color:#9a9da0;transform:scaleX(1.0000);">1</span><svg style="left:2464.00px;top:200.00px;" width="13.00" height="8.00" viewBox="0 0 13 8"><path d="M1 7 L6.5 1.4 L12 7" fill="none" stroke="#b4b6b8" stroke-width="1.7"/></svg><svg style="left:2492.00px;top:200.50px;" width="13.00" height="8.00" viewBox="0 0 13 8"><path d="M1 1 L6.5 6.6 L12 1" fill="none" stroke="#b4b6b8" stroke-width="1.7"/></svg><div style="left:2497.00px;top:580.50px;width:18.00px;height:2.00px;background:#c9971c;"></div><div style="left:677.00px;top:824.00px;width:1838.00px;height:27.50px;background:#001e02;"></div><div style="left:677.00px;top:1323.00px;width:1838.00px;height:33.00px;background:#3c3f41;"></div><span class="t" style="left:710.40px;top:1334.96px;font-size:15.4px;font-weight:400;color:#bbbbbb;transform:scaleX(0.9492);">Text</span><span class="t" style="left:772.00px;top:1334.96px;font-size:15.4px;font-weight:400;color:#bbbbbb;transform:scaleX(0.9239);">Source Code Editor With Preview</span><div style="left:690.00px;top:1355.50px;width:66.00px;height:3.50px;background:#747a80;"></div><div style="left:2515.00px;top:152.00px;width:27.00px;height:1203.00px;background:#3c3f41;"></div><div style="left:2515.00px;top:152.00px;width:1.00px;height:1203.00px;background:#323232;"></div><svg style="left:2520.50px;top:166.00px;" width="17.00" height="18.00" viewBox="0 0 17 18"><path d="M8 1.5 C3.8 1.5 3.4 6 3.2 9.6 L0.8 13 H15.2 L12.8 9.6 C12.6 6 12.2 1.5 8 1.5 Z" fill="#afb1b3"/><path d="M6 14.2 A2.1 2.1 0 0 0 10 14.2 Z" fill="#afb1b3"/><circle cx="13.3" cy="3.4" r="3.1" fill="#3d8fe0" stroke="#3c3f41" stroke-width="0.8"/></svg><span class="t" style="left:2527.50px;top:229.00px;font-size:15.4px;font-weight:400;color:#bbbbbb;transform-origin:0 0;transform:rotate(90deg) scaleX(0.9303) translate(-50%,-50%);">Notifications</span><svg style="left:2519.50px;top:296.00px;" width="19.00" height="14.00" viewBox="0 0 21 15"><path d="M1 13.6 C0.6 7 4 3.2 9.4 3.4 C11 1.2 15.6 0.4 17.6 3 C19.4 5.2 18.4 8.6 15.8 9 C15.2 9 14.8 8.4 15 7.8 C14 9.2 12.6 9.6 11.6 9.4 V13.6 H8.6 V11 H5.8 V13.6 Z" fill="#afb1b3"/><path d="M17.4 2.6 C19.6 1.6 20.8 3.4 19.6 5" fill="none" stroke="#afb1b3" stroke-width="1.2"/></svg><span class="t" style="left:2527.50px;top:338.20px;font-size:15.4px;font-weight:400;color:#bbbbbb;transform-origin:0 0;transform:rotate(90deg) scaleX(0.8831) translate(-50%,-50%);">Gradle</span><svg style="left:2520.00px;top:387.00px;" width="18.00" height="16.00" viewBox="1.5 4 18.5 14"><path d="M2.5 15.2 A7.5 7.2 0 0 1 17.5 15.2 Z" fill="#afb1b3"/><path d="M5.6 5.2 L7.6 8.6 M14.4 5.2 L12.4 8.6" stroke="#afb1b3" stroke-width="1.3" stroke-linecap="round"/><circle cx="6.8" cy="12" r="0.9" fill="#3c3f41"/><circle cx="13.2" cy="12" r="0.9" fill="#3c3f41"/><path d="M15.5 9.5 L16.6 12.4 L19.5 13.5 L16.6 14.6 L15.5 17.5 L14.4 14.6 L11.5 13.5 L14.4 12.4 Z" fill="#afb1b3" stroke="#3c3f41" stroke-width="0.8"/></svg><span class="t" style="left:2527.50px;top:440.75px;font-size:15.4px;font-weight:400;color:#bbbbbb;transform-origin:0 0;transform:rotate(90deg) scaleX(0.9362) translate(-50%,-50%);">Studio Bot</span><svg style="left:2520.00px;top:507.50px;" width="18.00" height="12.00" viewBox="0 0 18 12"><path d="M7.4 1.4 H5.6 A4.6 4.6 0 0 0 5.6 10.6 H7.4 M10.6 1.4 H12.4 A4.6 4.6 0 0 1 12.4 10.6 H10.6 M5.4 6 H12.6" fill="none" stroke="#afb1b3" stroke-width="2"/></svg><span class="t" style="left:2527.50px;top:586.75px;font-size:15.4px;font-weight:400;color:#bbbbbb;transform-origin:0 0;transform:rotate(90deg) scaleX(0.8953) translate(-50%,-50%);">App Links Assistant</span><svg style="left:2520.50px;top:678.50px;" width="17.00" height="18.00" viewBox="0 0 17 18"><rect x="1" y="1" width="9.4" height="14" rx="1.4" fill="none" stroke="#afb1b3" stroke-width="2"/><rect x="6.5" y="9.5" width="10.5" height="8.5" fill="#3c3f41"/><path d="M7.6 17.6 A4.6 5 0 0 1 16.8 17.6 Z" fill="#afb1b3"/><path d="M9 10.8 L10.4 12.8 M15.4 10.8 L14 12.8" stroke="#afb1b3" stroke-width="1"/></svg><span class="t" style="left:2527.50px;top:752.50px;font-size:15.4px;font-weight:400;color:#bbbbbb;transform-origin:0 0;transform:rotate(90deg) scaleX(0.9190) translate(-50%,-50%);">Device Manager</span><span class="t" style="left:2520.20px;top:907.88px;font-size:15.5px;font-weight:400;color:#afb1b3;transform:scaleX(1.1791);">{ }</span><span class="t" style="left:2527.50px;top:981.25px;font-size:15.4px;font-weight:400;color:#bbbbbb;transform-origin:0 0;transform:rotate(90deg) scaleX(0.9060) translate(-50%,-50%);">JSON Formatter</span><svg style="left:2521.00px;top:1063.50px;" width="16.00" height="17.00" viewBox="0 0 16 17"><path d="M11 1 H1 V13 H8" fill="none" stroke="#afb1b3" stroke-width="1.8"/><rect x="9.6" y="5.4" width="5" height="7.6" fill="none" stroke="#afb1b3" stroke-width="1.4"/><path d="M5 16 H15.5" stroke="#afb1b3" stroke-width="1.6"/></svg><span class="t" style="left:2527.50px;top:1138.60px;font-size:15.4px;font-weight:400;color:#bbbbbb;transform-origin:0 0;transform:rotate(90deg) scaleX(0.8955) translate(-50%,-50%);">Running Devices</span><svg style="left:2522.50px;top:1223.00px;" width="13.00" height="18.00" viewBox="0 0 13 18"><rect x="1.1" y="1.1" width="10.8" height="15.4" rx="1.6" fill="none" stroke="#afb1b3" stroke-width="2.2"/><rect x="4.5" y="13" width="4" height="2" fill="#afb1b3"/></svg><span class="t" style="left:2527.50px;top:1295.55px;font-size:15.4px;font-weight:400;color:#bbbbbb;transform-origin:0 0;transform:rotate(90deg) scaleX(0.9048) translate(-50%,-50%);">Device Explorer</span><div style="left:17.00px;top:1355.00px;width:2525.00px;height:60.00px;background:#3c3f41;"></div><div style="left:17.00px;top:1362.00px;width:2525.00px;height:1.00px;background:#323232;"></div><div style="left:17.00px;top:1390.00px;width:2525.00px;height:1.00px;background:#323232;"></div><span class="t" style="left:85.00px;top:1368.96px;font-size:15.4px;font-weight:400;color:#bbbbbb;transform:scaleX(0.9313);">Version Control</span><span class="t" style="left:235.00px;top:1368.96px;font-size:15.4px;font-weight:400;color:#bbbbbb;transform:scaleX(0.8826);">TODO</span><span class="t" style="left:324.00px;top:1368.96px;font-size:15.4px;font-weight:400;color:#bbbbbb;transform:scaleX(0.9075);">Problems</span><span class="t" style="left:434.00px;top:1368.96px;font-size:15.4px;font-weight:400;color:#bbbbbb;transform:scaleX(0.9455);">Terminal</span><span class="t" style="left:540.00px;top:1368.96px;font-size:15.4px;font-weight:400;color:#bbbbbb;transform:scaleX(0.9277);">App Quality Insights</span><span class="t" style="left:723.00px;top:1368.96px;font-size:15.4px;font-weight:400;color:#bbbbbb;transform:scaleX(0.9329);">App Inspection</span><span class="t" style="left:870.00px;top:1368.96px;font-size:15.4px;font-weight:400;color:#bbbbbb;transform:scaleX(0.9087);">Logcat</span><span class="t" style="left:961.00px;top:1368.96px;font-size:15.4px;font-weight:400;color:#bbbbbb;transform:scaleX(0.8811);">Services</span><span class="t" style="left:1061.00px;top:1368.96px;font-size:15.4px;font-weight:400;color:#bbbbbb;transform:scaleX(0.9055);">Build</span><span class="t" style="left:1140.00px;top:1368.96px;font-size:15.4px;font-weight:400;color:#bbbbbb;transform:scaleX(0.9436);">Profiler</span><svg style="left:66.00px;top:1369.00px;" width="15.00" height="14.00" viewBox="0 0 15 14"><circle cx="3" cy="2.6" r="2" fill="#afb1b3"/><circle cx="3" cy="11.4" r="2" fill="#afb1b3"/><circle cx="11" cy="4" r="2" fill="#afb1b3"/><path d="M3 3 V11 M11 5 C11 9 3 7 3 10" fill="none" stroke="#afb1b3" stroke-width="1.4"/></svg><svg style="left:214.00px;top:1369.00px;" width="15.00" height="14.00" viewBox="0 0 15 14"><rect x="0" y="1" width="3" height="2.6" fill="#afb1b3"/><rect x="4.6" y="1" width="10" height="2.6" fill="#afb1b3"/><rect x="0" y="5.7" width="3" height="2.6" fill="#afb1b3"/><rect x="4.6" y="5.7" width="10" height="2.6" fill="#afb1b3"/><rect x="0" y="10.4" width="3" height="2.6" fill="#afb1b3"/><rect x="4.6" y="10.4" width="10" height="2.6" fill="#afb1b3"/></svg><svg style="left:303.00px;top:1369.00px;" width="15.00" height="14.00" viewBox="0 0 15 14"><circle cx="7" cy="7" r="7" fill="#afb1b3"/><rect x="6" y="3" width="2" height="5" fill="#3c3f41"/><rect x="6" y="9.4" width="2" height="2" fill="#3c3f41"/></svg><svg style="left:413.00px;top:1369.00px;" width="15.00" height="14.00" viewBox="0 0 15 14"><rect x="0" y="0" width="15" height="14" fill="#afb1b3"/><path d="M2.6 3.4 L6.4 6.8 L2.6 10.2 M7.6 10.6 H12" fill="none" stroke="#3c3f41" stroke-width="1.6"/></svg><svg style="left:519.00px;top:1369.00px;" width="16.00" height="14.00" viewBox="0 0 16 14"><path d="M3.6 0.8 H12.4 L15.4 5 L8 13.4 L0.6 5 Z M0.8 5 H15.2 M5.6 1 L4.6 5 L8 13 L11.4 5 L10.4 1" fill="none" stroke="#afb1b3" stroke-width="1.3"/></svg><svg style="left:702.00px;top:1369.00px;" width="15.00" height="14.00" viewBox="0 0 15 14"><path d="M3.4 4.6 V1.6 Q7 -0.4 10.6 1.6 V4.6 H13.6 V6.2 H0.4 V4.6 Z" fill="#afb1b3"/><ellipse cx="7" cy="9.6" rx="4.4" ry="4" fill="#afb1b3"/></svg><svg style="left:849.00px;top:1369.00px;" width="15.00" height="14.00" viewBox="0 0 15 14"><rect x="0" y="1" width="15" height="2.4" fill="#afb1b3"/><rect x="0" y="5.8" width="9" height="2.4" fill="#afb1b3"/><rect x="0" y="10.6" width="12" height="2.4" fill="#afb1b3"/></svg><svg style="left:940.00px;top:1369.00px;" width="16.00" height="14.00" viewBox="0 0 16 14"><path d="M4 0.4 H12 L16 7 L12 13.6 H4 L0 7 Z" fill="#afb1b3"/><path d="M6 3.6 L11.4 7 L6 10.4 Z" fill="#3c3f41"/></svg><svg style="left:1040.00px;top:1369.00px;" width="15.00" height="14.00" viewBox="0 0 15 14"><path d="M1.4 4.6 L5.6 0.6 L9.2 3 L7.2 3.6 L5.4 5.4 L13.6 12.4 L12 14 L4 7 L3 7.8 Z" fill="#afb1b3"/></svg><svg style="left:1118.00px;top:1369.00px;" width="16.00" height="14.00" viewBox="0 0 16 14"><path d="M1.6 11.6 A6.4 6.4 0 1 1 14.4 11.6" fill="none" stroke="#afb1b3" stroke-width="2.6"/><path d="M8 11 L12 5" stroke="#afb1b3" stroke-width="2"/></svg><span class="t" style="left:2395.00px;top:1368.96px;font-size:15.4px;font-weight:400;color:#bbbbbb;transform:scaleX(0.9139);">Layout Inspector</span><svg style="left:2372.00px;top:1368.00px;" width="17.00" height="16.00" viewBox="0 0 17 16"><path d="M3 9 H0.8 V0.8 H11.2 V3" fill="none" stroke="#afb1b3" stroke-width="1.4"/><path d="M8 12 H3.8 V3.8 H14.2 V7" fill="none" stroke="#afb1b3" stroke-width="1.4"/><circle cx="10.6" cy="9.8" r="2.8" fill="none" stroke="#afb1b3" stroke-width="1.5"/><path d="M12.6 11.8 L16 15.2" stroke="#afb1b3" stroke-width="1.8"/></svg><svg style="left:33.00px;top:1394.00px;" width="16.00" height="15.00" viewBox="0 0 16 15"><rect x="0.8" y="3.8" width="10.4" height="10.4" fill="none" stroke="#afb1b3" stroke-width="1.4"/><path d="M4 3.8 V0.8 H15.2 V11 H11.4" fill="none" stroke="#afb1b3" stroke-width="1.4"/></svg><span class="t" style="left:68.00px;top:1394.96px;font-size:15.4px;font-weight:400;color:#bbbbbb;transform:scaleX(1.0216);">Gradle sync finished in 1 m 32 s 589 ms (38 minutes ago)</span><span class="t" style="left:2155.00px;top:1394.96px;font-size:15.4px;font-weight:400;color:#bbbbbb;transform:scaleX(0.9176);">24:2</span><span class="t" style="left:2199.50px;top:1394.96px;font-size:15.4px;font-weight:400;color:#bbbbbb;transform:scaleX(0.8070);">LF</span><span class="t" style="left:2231.00px;top:1394.96px;font-size:15.4px;font-weight:400;color:#bbbbbb;transform:scaleX(0.9402);">UTF-8</span><svg style="left:2288.00px;top:1394.00px;" width="16.00" height="14.00" viewBox="0 0 16 14"><path d="M0 0 H16 V10 H12 L14 14 L8 10 H0 Z" fill="#afb1b3"/><rect x="7" y="1.6" width="2" height="4.4" fill="#3c3f41"/><rect x="7" y="7" width="2" height="1.8" fill="#3c3f41"/></svg><span class="t" style="left:2320.00px;top:1394.96px;font-size:15.4px;font-weight:400;color:#bbbbbb;transform:scaleX(0.9414);">4 spaces</span><svg style="left:2393.50px;top:1392.50px;" width="15.00" height="16.00" viewBox="0 0 15 16"><rect x="3" y="8" width="12" height="8" fill="#afb1b3"/><path d="M1 8 V4 A3 3 0 0 1 7 4 V5" fill="none" stroke="#afb1b3" stroke-width="1.8"/></svg><div style="left:2418.50px;top:1391.00px;width:112.00px;height:24.00px;background:#45494a;"></div><span class="t" style="left:2427.80px;top:1394.96px;font-size:15.4px;font-weight:400;color:#bbbbbb;transform:scaleX(1.0305);">927 of 3072M</span><div style="left:609.00px;top:280.50px;width:1341.50px;height:894.00px;background:#3c3f41;border-radius:10px;box-shadow:0 26px 58px 2px rgba(0,0,0,0.5),0 4px 14px rgba(0,0,0,0.25),0 0 0 1px rgba(30,30,30,0.3);overflow:hidden;"><div style="left:0;top:34.5px;width:100%;height:148.8px;background:#4b4b4d;"></div></div><div style="left:625.00px;top:288.00px;width:21.30px;height:21.00px;background:#222528;"></div><svg style="left:626.00px;top:288.30px;" width="19.50" height="19.50" viewBox="0 0 20 20"><path d="M2.2 16 A7.8 8 0 0 1 17.8 16 Z" fill="#ffffff"/><path d="M4.7 13.5 A5.3 5 0 0 1 15.3 13.5 Z" fill="#222528"/><path d="M5.4 4.4 L7.4 8 M14.6 4.4 L12.6 8" stroke="#ffffff" stroke-width="1.3" stroke-linecap="round"/><circle cx="7.3" cy="12" r="0.85" fill="#ffffff"/><circle cx="12.7" cy="12" r="0.85" fill="#ffffff"/></svg><span class="t" style="left:662.50px;top:291.96px;font-size:15.4px;font-weight:400;color:#bbbbbb;transform:scaleX(0.9893);">Asset Studio</span><svg style="left:1921.50px;top:291.00px;" width="13.50" height="13.50" viewBox="0 0 13.5 13.5"><path d="M0.8 0.8 L12.7 12.7 M12.7 0.8 L0.8 12.7" stroke="#d6d6d6" stroke-width="1.5"/></svg><svg style="left:625.00px;top:335.00px;" width="100.00" height="100.00" viewBox="0 0 100 100"><polygon points="50.30,10.80 51.32,10.89 52.33,11.14 53.31,11.54 54.27,12.04 55.19,12.62 56.09,13.22 56.97,13.79 57.84,14.31 58.72,14.72 59.62,15.03 60.55,15.21 61.51,15.29 62.52,15.28 63.57,15.22 64.65,15.15 65.74,15.12 66.82,15.16 67.88,15.31 68.87,15.59 69.80,16.03 70.64,16.61 71.38,17.33 72.04,18.17 72.61,19.09 73.13,20.05 73.61,21.02 74.08,21.96 74.58,22.83 75.13,23.63 75.76,24.34 76.47,24.97 77.27,25.52 78.14,26.02 79.08,26.49 80.05,26.97 81.01,27.49 81.93,28.06 82.77,28.72 83.49,29.46 84.07,30.30 84.51,31.23 84.79,32.22 84.94,33.28 84.98,34.36 84.95,35.45 84.88,36.53 84.82,37.58 84.81,38.59 84.89,39.55 85.07,40.48 85.38,41.38 85.79,42.26 86.31,43.13 86.88,44.01 87.48,44.91 88.06,45.83 88.56,46.79 88.96,47.77 89.21,48.78 89.30,49.80 89.21,50.82 88.96,51.83 88.56,52.81 88.06,53.77 87.48,54.69 86.88,55.59 86.31,56.47 85.79,57.34 85.38,58.22 85.07,59.12 84.89,60.05 84.81,61.01 84.82,62.02 84.88,63.07 84.95,64.15 84.98,65.24 84.94,66.32 84.79,67.38 84.51,68.37 84.07,69.30 83.49,70.14 82.77,70.88 81.93,71.54 81.01,72.11 80.05,72.63 79.08,73.11 78.14,73.58 77.27,74.08 76.47,74.63 75.76,75.26 75.13,75.97 74.58,76.77 74.08,77.64 73.61,78.58 73.13,79.55 72.61,80.51 72.04,81.43 71.38,82.27 70.64,82.99 69.80,83.57 68.87,84.01 67.88,84.29 66.82,84.44 65.74,84.48 64.65,84.45 63.57,84.38 62.52,84.32 61.51,84.31 60.55,84.39 59.62,84.57 58.72,84.88 57.84,85.29 56.97,85.81 56.09,86.38 55.19,86.98 54.27,87.56 53.31,88.06 52.33,88.46 51.32,88.71 50.30,88.80 49.28,88.71 48.27,88.46 47.29,88.06 46.33,87.56 45.41,86.98 44.51,86.38 43.63,85.81 42.76,85.29 41.88,84.88 40.98,84.57 40.05,84.39 39.09,84.31 38.08,84.32 37.03,84.38 35.95,84.45 34.86,84.48 33.78,84.44 32.72,84.29 31.73,84.01 30.80,83.57 29.96,82.99 29.22,82.27 28.56,81.43 27.99,80.51 27.47,79.55 26.99,78.58 26.52,77.64 26.02,76.77 25.47,75.97 24.84,75.26 24.13,74.63 23.33,74.08 22.46,73.58 21.52,73.11 20.55,72.63 19.59,72.11 18.67,71.54 17.83,70.88 17.11,70.14 16.53,69.30 16.09,68.37 15.81,67.38 15.66,66.32 15.62,65.24 15.65,64.15 15.72,63.07 15.78,62.02 15.79,61.01 15.71,60.05 15.53,59.12 15.22,58.22 14.81,57.34 14.29,56.47 13.72,55.59 13.12,54.69 12.54,53.77 12.04,52.81 11.64,51.83 11.39,50.82 11.30,49.80 11.39,48.78 11.64,47.77 12.04,46.79 12.54,45.83 13.12,44.91 13.72,44.01 14.29,43.13 14.81,42.26 15.22,41.38 15.53,40.48 15.71,39.55 15.79,38.59 15.78,37.58 15.72,36.53 15.65,35.45 15.62,34.36 15.66,33.28 15.81,32.22 16.09,31.23 16.53,30.30 17.11,29.46 17.83,28.72 18.67,28.06 19.59,27.49 20.55,26.97 21.52,26.49 22.46,26.02 23.33,25.52 24.13,24.97 24.84,24.34 25.47,23.63 26.02,22.83 26.52,21.96 26.99,21.02 27.47,20.05 27.99,19.09 28.56,18.17 29.22,17.33 29.96,16.61 30.80,16.03 31.73,15.59 32.72,15.31 33.78,15.16 34.86,15.12 35.95,15.15 37.03,15.22 38.08,15.28 39.09,15.29 40.05,15.21 40.98,15.03 41.88,14.72 42.76,14.31 43.63,13.79 44.51,13.22 45.41,12.62 46.33,12.04 47.29,11.54 48.27,11.14 49.28,10.89" fill="#ffffff"/><g transform="rotate(-25 64.5 49.5)"><path d="M58 52.5 A6.6 7 0 0 1 71 52.5 Z" transform="rotate(90 64.5 49.5)" fill="#5aab66"/></g><ellipse cx="65" cy="49.5" rx="5.4" ry="7.6" fill="#5aab66" transform="rotate(-18 65 49.5)"/><path d="M67.5 44.5 L69.6 42.2 M69.6 52.6 L72.4 52" stroke="#5aab66" stroke-width="1.1" stroke-linecap="round"/><circle cx="63.8" cy="45.8" r="0.9" fill="#1b3a22"/><circle cx="66.3" cy="53.4" r="0.9" fill="#1b3a22"/><path d="M31 48.5 C33.5 56.5 44 60.5 58.5 56.8" fill="none" stroke="#3b82f6" stroke-width="7" stroke-linecap="round"/><path d="M50.3 25 V31" stroke="#3b82f6" stroke-width="5.2" stroke-linecap="round"/><path d="M47.2 36 L36.2 65.5" stroke="#4087f7" stroke-width="8.4" stroke-linecap="round"/><path d="M53.3 36 L64.4 65.5" stroke="#3177ee" stroke-width="8.4" stroke-linecap="round"/><path d="M36.6 68.5 L33 74 L34.2 67.6 Z M64 68.5 L67.6 74 L66.4 67.6 Z" fill="#2f74ea" stroke="#2f74ea" stroke-width="1.6" stroke-linejoin="round"/><circle cx="50.2" cy="34.2" r="4.7" fill="#ffffff" stroke="#202124" stroke-width="2.6"/></svg><span class="t" style="left:739.00px;top:371.93px;font-size:30.8px;font-weight:400;color:#f2f2f2;transform:scaleX(1.0062);">Configure Image Asset</span><span class="t" style="left:641.00px;top:509.36px;font-size:15.4px;font-weight:400;color:#bbbbbb;transform:scaleX(1.0190);">Icon type:</span><div style="left:763.00px;top:500.00px;width:335.80px;height:30.80px;background:#3c3f41;border:1px solid #646667;border-radius:4px;"></div><span class="t" style="left:771.80px;top:509.26px;font-size:15.4px;font-weight:400;color:#bbbbbb;transform:scaleX(0.9987);">Launcher Icons (Adaptive and Legacy)</span><svg style="left:1077.50px;top:512.80px;" width="11.50" height="6.50" viewBox="0 0 12 7"><path d="M0 0 H12 L6 7 Z" fill="#9a9da0"/></svg><span class="t" style="left:641.00px;top:554.96px;font-size:15.4px;font-weight:400;color:#bbbbbb;transform:scaleX(0.9924);">Name:</span><div style="left:763.00px;top:545.80px;width:335.80px;height:31.00px;background:#45494a;border:1px solid #646667;"></div><span class="t" style="left:771.80px;top:554.96px;font-size:15.4px;font-weight:400;color:#bbbbbb;transform:scaleX(0.9807);">ic_launcher</span><div style="left:641.00px;top:634.00px;width:461.50px;height:1.00px;background:#2f3133;"></div><div style="left:641.00px;top:630.00px;width:157.80px;height:5.00px;background:#4a88c7;"></div><span class="t" style="left:658.80px;top:604.96px;font-size:15.4px;font-weight:400;color:#bbbbbb;transform:scaleX(1.0070);">Foreground Layer</span><span class="t" style="left:816.00px;top:604.96px;font-size:15.4px;font-weight:400;color:#bbbbbb;transform:scaleX(0.9990);">Background Layer</span><span class="t" style="left:975.00px;top:604.96px;font-size:15.4px;font-weight:400;color:#bbbbbb;transform:scaleX(1.0368);">Options</span><span class="t" style="left:652.00px;top:654.96px;font-size:15.4px;font-weight:400;color:#bbbbbb;transform:scaleX(0.9759);">Layer name:</span><div style="left:774.20px;top:645.80px;width:313.80px;height:31.00px;background:#45494a;border:1px solid #646667;"></div><span class="t" style="left:782.00px;top:654.96px;font-size:15.4px;font-weight:400;color:#bbbbbb;transform:scaleX(1.0129);">ic_launcher_foreground</span><span class="t" style="left:652.00px;top:701.26px;font-size:15.4px;font-weight:400;color:#bbbbbb;transform:scaleX(0.9792);">Source Asset</span><div style="left:749.50px;top:707.50px;width:342.50px;height:1.00px;background:#555759;"></div><span class="t" style="left:665.00px;top:738.26px;font-size:15.4px;font-weight:400;color:#bbbbbb;transform:scaleX(0.9916);">Asset type:</span><svg style="left:772.50px;top:735.00px;" width="20.00" height="20.00" viewBox="0 0 20 20"><circle cx="10" cy="10" r="9.1" fill="#43494a" stroke="#6e7072" stroke-width="1.3"/><circle cx="10" cy="10" r="3.3" fill="#e0e0e0"/></svg><span class="t" style="left:800.50px;top:738.26px;font-size:15.4px;font-weight:400;color:#bbbbbb;transform:scaleX(0.9934);">Image</span><svg style="left:858.80px;top:735.00px;" width="20.00" height="20.00" viewBox="0 0 20 20"><circle cx="10" cy="10" r="9.1" fill="#43494a" stroke="#6e7072" stroke-width="1.3"/></svg><span class="t" style="left:887.00px;top:738.26px;font-size:15.4px;font-weight:400;color:#bbbbbb;transform:scaleX(1.0215);">Clip art</span><svg style="left:952.50px;top:735.00px;" width="20.00" height="20.00" viewBox="0 0 20 20"><circle cx="10" cy="10" r="9.1" fill="#43494a" stroke="#6e7072" stroke-width="1.3"/></svg><span class="t" style="left:980.80px;top:738.26px;font-size:15.4px;font-weight:400;color:#bbbbbb;transform:scaleX(1.0165);">Text</span><span class="t" style="left:665.00px;top:776.96px;font-size:15.4px;font-weight:400;color:#bbbbbb;transform:scaleX(0.9405);">Path:</span><div style="left:774.20px;top:768.20px;width:313.80px;height:31.00px;background:#45494a;border:1px solid #646667;"></div><span class="t" style="left:782.50px;top:777.36px;font-size:15.4px;font-weight:400;color:#bbbbbb;transform:scaleX(1.0148);">set_studio\ic_launcher_foreground.xml</span><svg style="left:1060.00px;top:777.00px;" width="20.00" height="15.00" viewBox="0 0 20 15.5"><path d="M0.5 14.5 V1 H6.5 L8.3 3.2 H15.5 V5.5 H4.2 L0.5 14.5 Z" fill="#7f8b91"/><path d="M1.2 15 L4.8 6.6 H19.5 L15.9 15 Z" fill="#7f8b91"/></svg><span class="t" style="left:652.00px;top:830.26px;font-size:15.4px;font-weight:400;color:#bbbbbb;transform:scaleX(0.9666);">Scaling</span><div style="left:709.50px;top:836.50px;width:382.50px;height:1.00px;background:#555759;"></div><span class="t" style="left:665.00px;top:866.96px;font-size:15.4px;font-weight:400;color:#bbbbbb;transform:scaleX(1.0005);">Trim:</span><svg style="left:772.50px;top:864.20px;" width="20.00" height="20.00" viewBox="0 0 20 20"><circle cx="10" cy="10" r="9.1" fill="#43494a" stroke="#6e7072" stroke-width="1.3"/></svg><span class="t" style="left:800.50px;top:866.96px;font-size:15.4px;font-weight:400;color:#bbbbbb;transform:scaleX(0.9080);">Yes</span><svg style="left:839.30px;top:864.20px;" width="20.00" height="20.00" viewBox="0 0 20 20"><circle cx="10" cy="10" r="9.1" fill="#43494a" stroke="#6e7072" stroke-width="1.3"/><circle cx="10" cy="10" r="3.3" fill="#e0e0e0"/></svg><span class="t" style="left:867.50px;top:866.96px;font-size:15.4px;font-weight:400;color:#bbbbbb;transform:scaleX(1.0413);">No</span><span class="t" style="left:665.00px;top:905.76px;font-size:15.4px;font-weight:400;color:#bbbbbb;transform:scaleX(0.9118);">Resize:</span><div style="left:784.20px;top:906.00px;width:229.00px;height:4.00px;background:#646667;border-radius:2px;"></div><div style="left:785.00px;top:917.00px;width:1.20px;height:7.00px;background:#6e7072;"></div><div style="left:796.33px;top:917.00px;width:1.20px;height:7.00px;background:#6e7072;"></div><div style="left:807.65px;top:917.00px;width:1.20px;height:7.00px;background:#6e7072;"></div><div style="left:818.98px;top:917.00px;width:1.20px;height:7.00px;background:#6e7072;"></div><div style="left:830.30px;top:917.00px;width:1.20px;height:7.00px;background:#6e7072;"></div><div style="left:841.62px;top:917.00px;width:1.20px;height:7.00px;background:#6e7072;"></div><div style="left:852.95px;top:917.00px;width:1.20px;height:7.00px;background:#6e7072;"></div><div style="left:864.27px;top:917.00px;width:1.20px;height:7.00px;background:#6e7072;"></div><div style="left:875.60px;top:917.00px;width:1.20px;height:7.00px;background:#6e7072;"></div><div style="left:886.92px;top:917.00px;width:1.20px;height:7.00px;background:#6e7072;"></div><div style="left:898.25px;top:917.00px;width:1.20px;height:7.00px;background:#6e7072;"></div><div style="left:909.58px;top:917.00px;width:1.20px;height:7.00px;background:#6e7072;"></div><div style="left:920.90px;top:917.00px;width:1.20px;height:7.00px;background:#6e7072;"></div><div style="left:932.23px;top:917.00px;width:1.20px;height:7.00px;background:#6e7072;"></div><div style="left:943.55px;top:917.00px;width:1.20px;height:7.00px;background:#6e7072;"></div><div style="left:954.88px;top:917.00px;width:1.20px;height:7.00px;background:#6e7072;"></div><div style="left:966.20px;top:917.00px;width:1.20px;height:7.00px;background:#6e7072;"></div><div style="left:977.52px;top:917.00px;width:1.20px;height:7.00px;background:#6e7072;"></div><div style="left:988.85px;top:917.00px;width:1.20px;height:7.00px;background:#6e7072;"></div><div style="left:1000.17px;top:917.00px;width:1.20px;height:7.00px;background:#6e7072;"></div><div style="left:1011.50px;top:917.00px;width:1.20px;height:7.00px;background:#6e7072;"></div><svg style="left:832.50px;top:897.50px;" width="19.00" height="22.00" viewBox="0 0 19 22"><path d="M1.5 0 H17.5 A1.5 1.5 0 0 1 19 1.5 V12 L9.5 22 L0 12 V1.5 A1.5 1.5 0 0 1 1.5 0 Z" fill="#a4a6a8"/></svg><span class="t" style="left:1050.00px;top:905.76px;font-size:15.4px;font-weight:400;color:#bbbbbb;transform:scaleX(0.9578);">100 %</span><span class="t" style="left:1115.00px;top:509.96px;font-size:15.4px;font-weight:400;color:#bbbbbb;transform:scaleX(0.9680);">Preview</span><div style="left:1176.00px;top:517.00px;width:332.00px;height:1.00px;background:#555759;"></div><div style="left:1525.00px;top:499.80px;width:122.00px;height:30.80px;background:#3c3f41;border:1px solid #646667;border-radius:4px;"></div><span class="t" style="left:1533.00px;top:509.06px;font-size:15.4px;font-weight:400;color:#bbbbbb;transform:scaleX(1.0408);">xhdpi</span><svg style="left:1626.50px;top:512.60px;" width="11.50" height="6.50" viewBox="0 0 12 7"><path d="M0 0 H12 L6 7 Z" fill="#9a9da0"/></svg><div style="left:1668.00px;top:504.70px;width:18.50px;height:18.50px;background:#43494a;border:1.2px solid #6b6d6f;border-radius:3px;"></div><svg style="left:1671.00px;top:508.20px;" width="13.00" height="12.00" viewBox="0 0 13 12"><path d="M1.2 6 L4.8 10 L11.4 1.2" fill="none" stroke="#b4b8bc" stroke-width="2.2"/></svg><span class="t" style="left:1694.70px;top:507.26px;font-size:15.4px;font-weight:400;color:#bbbbbb;transform:scaleX(0.9980);">Show safe zone</span><div style="left:1821.60px;top:504.70px;width:18.50px;height:18.50px;background:#43494a;border:1.2px solid #6b6d6f;border-radius:3px;"></div><span class="t" style="left:1848.50px;top:507.26px;font-size:15.4px;font-weight:400;color:#bbbbbb;transform:scaleX(1.0182);">Show grid</span><div style="left:1114.90px;top:542.10px;width:804.20px;height:476.60px;background:#2e3032;"></div><svg style="left:1115.90px;top:543.10px;" width="802.20" height="474.60" viewBox="0 0 802.2 474.6"><defs><pattern id="ck" width="26.298" height="26.298" patternUnits="userSpaceOnUse"><rect width="26.298" height="26.298" fill="#ffffff"/><rect x="13.149" width="13.149" height="13.149" fill="#e0e0e2"/><rect y="13.149" width="13.149" height="13.149" fill="#e0e0e2"/></pattern></defs><rect width="802.2" height="474.6" fill="url(#ck)"/></svg><div style="left:1405.30px;top:731.20px;width:221.70px;height:96.60px;background:#3c3f41;box-shadow:0 1px 2px rgba(0,0,0,0.4);"></div><svg style="left:1495.40px;top:745.20px;" width="40.00" height="40.00" viewBox="0 0 40 40"><rect x="17.55" y="1.9" width="4.9" height="10" rx="2.45" fill="#505459" transform="rotate(0 20 20)"/><rect x="17.55" y="1.9" width="4.9" height="10" rx="2.45" fill="#565a60" transform="rotate(45 20 20)"/><rect x="17.55" y="1.9" width="4.9" height="10" rx="2.45" fill="#5e6268" transform="rotate(90 20 20)"/><rect x="17.55" y="1.9" width="4.9" height="10" rx="2.45" fill="#5f636b" transform="rotate(135 20 20)"/><rect x="17.55" y="1.9" width="4.9" height="10" rx="2.45" fill="#676b73" transform="rotate(180 20 20)"/><rect x="17.55" y="1.9" width="4.9" height="10" rx="2.45" fill="#6b7076" transform="rotate(225 20 20)"/><rect x="17.55" y="1.9" width="4.9" height="10" rx="2.45" fill="#6e737b" transform="rotate(270 20 20)"/><rect x="17.55" y="1.9" width="4.9" height="10" rx="2.45" fill="#4a4e53" transform="rotate(315 20 20)"/></svg><span class="t" style="left:1418.50px;top:797.76px;font-size:15.4px;font-weight:400;color:#999b9d;transform:scaleX(1.0023);">Rendering preview images...</span><svg style="left:642.50px;top:1041.00px;" width="18.30" height="16.20" viewBox="0 0 18 16"><path d="M9 0.3 L17.8 15.7 H0.2 Z" fill="#f0a732"/><rect x="8" y="5.2" width="2" height="5.4" fill="#3c3f41"/><rect x="8" y="11.8" width="2" height="2.1" fill="#3c3f41"/></svg><span class="t" style="left:675.50px;top:1043.26px;font-size:15.4px;font-weight:400;color:#bbbbbb;transform:scaleX(1.0304);">An icon with the same name already exists and will be overwritten.</span><div style="left:609.00px;top:1112.00px;width:1341.50px;height:1.30px;background:#323436;"></div><div style="left:628.70px;top:1129.20px;width:30.60px;height:30.60px;background:#4c5052;border:1px solid #5e6060;border-radius:50%;"></div><span class="t" style="left:638.60px;top:1134.25px;font-size:20.5px;font-weight:700;color:#b2b4b6;transform:scaleX(1.0000);">?</span><div style="left:1504.00px;top:1128.30px;width:96.00px;height:32.00px;background:transparent;border:1px solid #5a5d5f;border-radius:5px;"></div><span class="t" style="left:1522.80px;top:1137.56px;font-size:15.4px;font-weight:400;color:#777a7c;transform:scaleX(0.9768);">Previous</span><div style="left:1616.00px;top:1128.30px;width:94.00px;height:32.00px;background:transparent;background:#365880;border:1px solid #4c708c;border-radius:5px;"></div><span class="t" style="left:1646.50px;top:1137.56px;font-size:15.4px;font-weight:700;color:#cfd2d4;transform:scaleX(1.0337);"><u>N</u>ext</span><div style="left:1723.40px;top:1125.90px;width:99.60px;height:36.00px;background:#4c5052;border:3px solid #3f6fa3;border-radius:7px;"></div><span class="t" style="left:1750.00px;top:1137.56px;font-size:15.4px;font-weight:400;color:#bbbbbb;transform:scaleX(0.9599);"><u>C</u>ancel</span><div style="left:1836.30px;top:1128.30px;width:94.70px;height:32.00px;background:transparent;border:1px solid #5a5d5f;border-radius:5px;"></div><span class="t" style="left:1864.80px;top:1137.56px;font-size:15.4px;font-weight:400;color:#777a7c;transform:scaleX(0.9546);">Finish</span><svg style="left:1504.50px;top:818.50px;" width="18.00" height="26.00" viewBox="0 0 18 26"><path d="M1 1 V20 L5.6 15.8 L8.8 23.6 L12 22.2 L8.8 14.6 H15 Z" fill="#ffffff" stroke="#111" stroke-width="1.3" stroke-linejoin="round"/></svg><div style="left:0.00px;top:0.00px;width:2560.00px;height:46.00px;background:#272727;background:linear-gradient(#2a2a2a,#262626);"></div><div style="left:0.00px;top:0.00px;width:2560.00px;height:1.00px;background:#3a3a3a;"></div><div style="left:0.00px;top:46.00px;width:2560.00px;height:1.00px;background:#050505;"></div><div style="left:6.60px;top:6.50px;width:34.60px;height:33.00px;background:#333333;border-radius:6px;border:1px solid #1a1a1a;"></div><svg style="left:18.70px;top:15.00px;" width="11.00" height="15.00" viewBox="0 0 11 15"><path d="M9 1.2 L2.2 7.5 L9 13.8" fill="none" stroke="#ffffff" stroke-width="2.2"/></svg><span class="t" style="left:1177.00px;top:14.75px;font-size:14px;font-weight:700;color:#ffffff;transform:scaleX(0.8852);">studio64_2023-11-21_01-02-02.mp4</span><div style="left:2308.00px;top:6.50px;width:34.00px;height:33.00px;background:#333333;border-radius:6px;border:1px solid #1e1e1e;"></div><div style="left:2350.00px;top:6.50px;width:34.00px;height:33.00px;background:#333333;border-radius:6px;border:1px solid #1e1e1e;"></div><div style="left:2392.00px;top:6.50px;width:34.00px;height:33.00px;background:#333333;border-radius:6px;border:1px solid #1e1e1e;"></div><svg style="left:2316.50px;top:14.50px;" width="17.00" height="17.00" viewBox="0 0 17 17"><path d="M9.4 0.6 H16.4 V7.6 Z M7.6 16.4 H0.6 V9.4 Z" fill="#fff"/><path d="M14 3 L9.6 7.4 M3 14 L7.4 9.6" stroke="#fff" stroke-width="1.9"/></svg><svg style="left:2358.50px;top:16.00px;" width="17.00" height="14.00" viewBox="0 0 17 14"><rect x="1" y="1" width="15" height="12" rx="2.2" fill="none" stroke="#fff" stroke-width="1.8"/><path d="M3.4 9.4 H7.2 M8.6 9.4 H13.6" stroke="#fff" stroke-width="2"/></svg><svg style="left:2406.70px;top:14.00px;" width="5.00" height="18.00" viewBox="0 0 5 18"><circle cx="2.5" cy="2.6" r="2" fill="#fff"/><circle cx="2.5" cy="9" r="2" fill="#fff"/><circle cx="2.5" cy="15.4" r="2" fill="#fff"/></svg><div style="left:2452.80px;top:24.50px;width:8.40px;height:2.40px;background:#fff;"></div><div style="left:2493.80px;top:19.00px;width:6.80px;height:6.80px;background:transparent;border:2px solid #fff;"></div><svg style="left:2532.50px;top:18.30px;" width="9.50" height="9.50" viewBox="0 0 9.5 9.5"><path d="M1 1 L8.5 8.5 M8.5 1 L1 8.5" stroke="#fff" stroke-width="2.2"/></svg><div style="left:0.00px;top:1354.70px;width:2560.00px;height:60.30px;background:rgba(37,37,37,0.86);"></div><div style="left:13.50px;top:1368.40px;width:129.00px;height:32.80px;background:rgba(255,255,255,0.07);border:1px solid #0e0e0e;border-radius:6px;"></div><div style="left:49.50px;top:1369.40px;width:57.70px;height:30.80px;background:rgba(36,36,36,0.75);"></div><div style="left:48.50px;top:1369.00px;width:1.00px;height:31.60px;background:#1a1a1a;"></div><div style="left:107.20px;top:1369.00px;width:1.00px;height:31.60px;background:#1a1a1a;"></div><div style="left:50.00px;top:1369.70px;width:55.00px;height:30.00px;background:transparent;border:1px dotted #b0b0b0;"></div><svg style="left:24.00px;top:1378.50px;" width="14.50" height="13.00" viewBox="0 0 14.5 13"><rect x="0" y="0" width="2.4" height="13" fill="#b0b0b0"/><path d="M14.5 0 V13 L3.4 6.5 Z" fill="#b0b0b0"/></svg><svg style="left:72.20px;top:1378.00px;" width="12.60" height="14.00" viewBox="0 0 12.6 14"><path d="M0 0 L12.6 7 L0 14 Z" fill="#ffffff"/></svg><svg style="left:117.70px;top:1378.50px;" width="14.50" height="13.00" viewBox="0 0 14.5 13"><rect x="12.1" y="0" width="2.4" height="13" fill="#b0b0b0"/><path d="M0 0 V13 L11.1 6.5 Z" fill="#b0b0b0"/></svg><span class="t" style="left:159.40px;top:1377.47px;font-size:13.5px;font-weight:400;color:#ffffff;transform:scaleX(0.8713);">0:08</span><div style="left:199.00px;top:1383.00px;width:2216.00px;height:3.60px;background:#121212;border-radius:2px;"></div><div style="left:199.70px;top:1383.60px;width:856.00px;height:2.40px;background:#2d63b2;border-radius:2px;"></div><div style="left:1048.00px;top:1375.50px;width:18.50px;height:18.50px;background:#2c2c2c;border:1px solid #171717;border-radius:50%;"></div><span class="t" style="left:2431.00px;top:1377.97px;font-size:13.5px;font-weight:400;color:#ffffff;transform:scaleX(0.8902);">-0:15</span><div style="left:2475.30px;top:1368.40px;width:35.00px;height:32.80px;background:rgba(50,50,50,0.3);border:1px solid #0e0e0e;border-radius:6px;"></div><svg style="left:2485.00px;top:1376.00px;" width="17.00" height="18.00" viewBox="0 0 17 18"><path d="M2.6 17 V8 A5 5 0 0 1 12.6 8 V13.5 M8.4 10 L12.6 14.6 L16.4 10" fill="none" stroke="#fff" stroke-width="2.2"/></svg><svg style="left:2520.60px;top:1377.00px;" width="17.00" height="16.00" viewBox="0 0 17 16"><path d="M0.5 5 H4 L8.6 0.8 V15.2 L4 11 H0.5 Z" fill="#fff"/><path d="M10.8 4.6 A4.4 4.4 0 0 1 10.8 11.4 M13 1.8 A8 8 0 0 1 13 14.2" fill="none" stroke="#fff" stroke-width="1.7"/></svg></body></html>
